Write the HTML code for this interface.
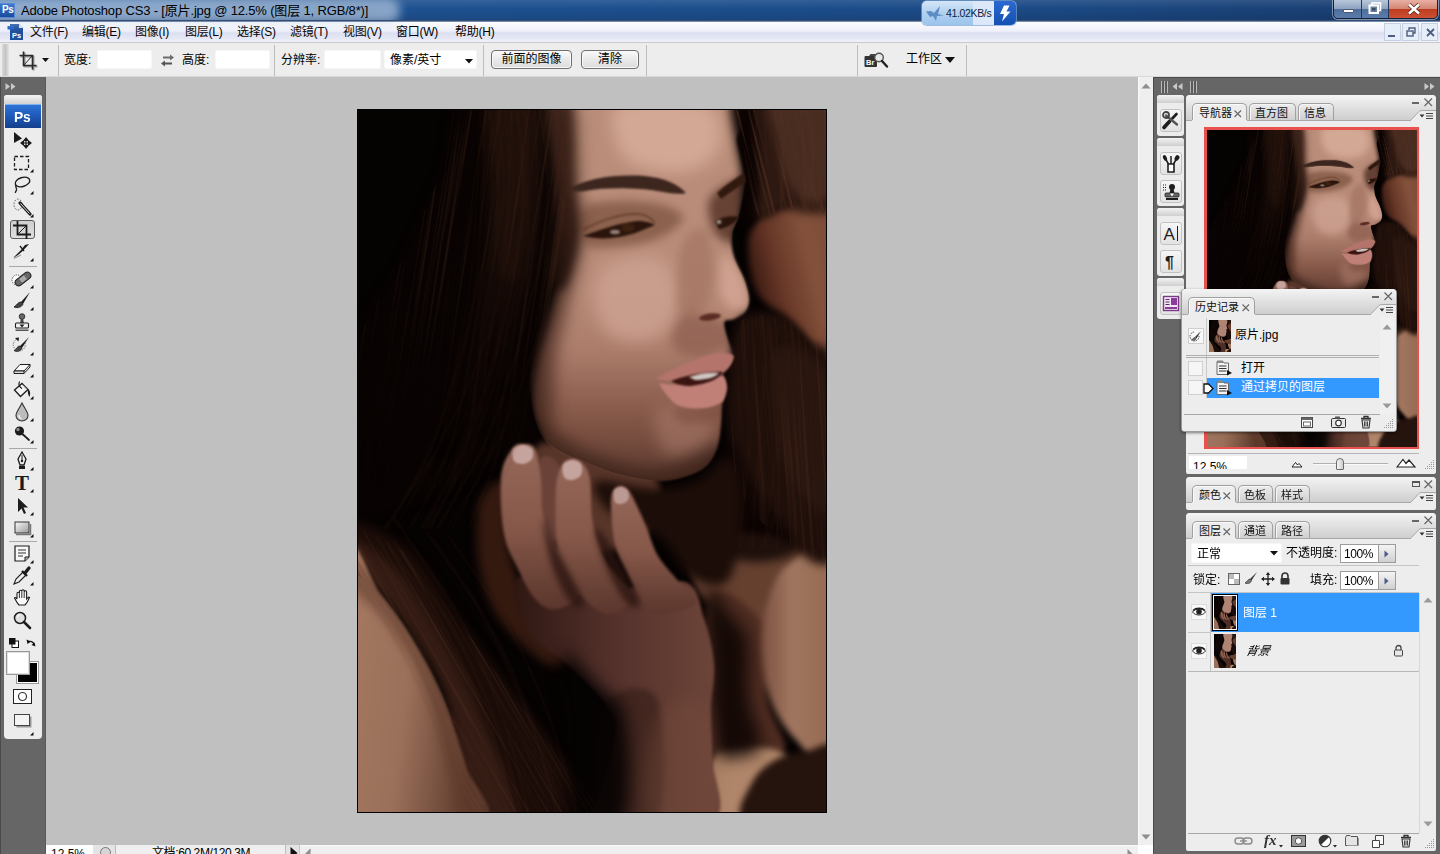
<!DOCTYPE html>
<html lang="zh-CN">
<head>
<meta charset="utf-8">
<title>Adobe Photoshop CS3</title>
<style>
*{box-sizing:border-box;margin:0;padding:0}
html,body{width:1440px;height:854px;overflow:hidden;background:#c0c0c0}
body{position:relative;font-family:"Liberation Sans","Noto Sans CJK SC",sans-serif;font-size:12px;color:#000}
.abs{position:absolute}
.t{position:absolute;white-space:nowrap;line-height:1}
/* title bar */
#title{z-index:3;left:0;top:0;width:1440px;height:22px;background:linear-gradient(90deg,#2f629f 0,#1e5191 27%,#1c4e8c 50%,#1b4a86 70%,#1a4278 88%,#193c6e 100%)}
#title .shade{left:0;top:0;width:1440px;height:22px;background:linear-gradient(180deg,rgba(255,255,255,.10) 0,rgba(255,255,255,0) 40%,rgba(0,0,0,.12) 100%)}
#title .edge{left:0;top:20px;width:1440px;height:2px;background:linear-gradient(180deg,#1b2f52,#8fa9cc)}
/* menu bar */
#menu{left:0;top:22px;width:1440px;height:20px;background:linear-gradient(180deg,#fdfdff 0,#eef0fa 45%,#dcdff0 55%,#e6e8f5 85%,#f1f2fa 100%)}
#menu .t{top:4px;font-size:12px;color:#000;letter-spacing:-.25px}
.mdi{top:1px;width:17px;height:18px;background:#e6eefa;border:1px solid #c4cfe2}
/* options bar */
#opts{left:0;top:42px;width:1440px;height:35px;background:#ededed;border-top:1px solid #c9c9c9;border-bottom:1px solid #d9d9d9}
#opts .t{font-size:12px}
.inp{position:absolute;background:#fff;border:1px solid #f7f7f7;border-radius:2px}
.vsep{position:absolute;width:1px;background:#bdbdbd}
.btn{position:absolute;border:1px solid #707070;border-radius:4px;background:linear-gradient(180deg,#fafafa,#e9e9e9 50%,#dcdcdc);font-size:12px;text-align:center;line-height:17px;white-space:nowrap;box-shadow:inset 0 0 0 1px #f8f8f8}
/* docks */
.dock{position:absolute;background:#666}
.panel{position:absolute;background:#ededed}
</style>
</head>
<body>
<svg width="0" height="0" style="position:absolute">
<symbol id="pht" viewBox="0 0 470 704" preserveAspectRatio="none">
<rect width="470" height="704" fill="#070302"/>
<path d="M105.0,0.0 C132.5,-25.0 191.7,-20.8 210.0,0.0 C228.3,20.8 220.0,82.5 215.0,125.0 C210.0,167.5 185.5,220.0 180.0,255.0 C174.5,290.0 197.0,314.2 182.0,335.0 C167.0,355.8 120.3,369.2 90.0,380.0 C59.7,390.8 15.0,421.7 0.0,400.0 C-15.0,378.3 -7.5,291.7 0.0,250.0 C7.5,208.3 27.5,191.7 45.0,150.0 C62.5,108.3 77.5,25.0 105.0,0.0Z" fill="#0e0604" />
<path d="M384.0,0.0 C394.7,-18.3 455.7,-16.7 470.0,0.0 C484.3,16.7 480.7,81.7 470.0,100.0 C459.3,118.3 420.3,126.7 406.0,110.0 C391.7,93.3 373.3,18.3 384.0,0.0Z" fill="#2a1610" />
<path d="M392.0,128.0 C392.3,109.7 417.0,105.3 430.0,98.0 C443.0,90.7 463.3,56.7 470.0,84.0 C476.7,111.3 477.0,241.3 470.0,262.0 C463.0,282.7 441.0,230.3 428.0,208.0 C415.0,185.7 391.7,146.3 392.0,128.0Z" fill="#663a2b" />
<path d="M392.0,205.0 C408.3,205.3 457.0,222.0 470.0,262.0 C483.0,302.0 484.2,424.5 470.0,445.0 C455.8,465.5 401.3,415.8 385.0,385.0 C368.7,354.2 370.8,290.0 372.0,260.0 C373.2,230.0 375.7,204.7 392.0,205.0Z" fill="#1a0c08" />
<path d="M205.0,0.0 C230.2,-20.8 341.7,-11.0 372.0,0.0 C402.3,11.0 386.7,45.2 387.0,66.0 C387.3,86.8 373.2,104.3 374.0,125.0 C374.8,145.7 393.2,175.3 392.0,190.0 C390.8,204.7 369.7,203.7 367.0,213.0 C364.3,222.3 376.3,232.2 376.0,246.0 C375.7,259.8 367.7,280.7 365.0,296.0 C362.3,311.3 367.3,325.8 360.0,338.0 C352.7,350.2 337.3,364.5 321.0,369.0 C304.7,373.5 281.7,369.5 262.0,365.0 C242.3,360.5 216.7,352.0 203.0,342.0 C189.3,332.0 184.0,321.0 180.0,305.0 C176.0,289.0 175.2,266.2 179.0,246.0 C182.8,225.8 196.0,204.2 203.0,184.0 C210.0,163.8 220.7,155.7 221.0,125.0 C221.3,94.3 179.8,20.8 205.0,0.0Z" fill="#b08474" />
<path d="M180.0,300.0 C184.5,299.7 210.0,330.0 230.0,340.0 C250.0,350.0 278.0,360.8 300.0,360.0 C322.0,359.2 358.5,333.5 362.0,335.0 C365.5,336.5 337.7,364.0 321.0,369.0 C304.3,374.0 281.7,369.5 262.0,365.0 C242.3,360.5 216.7,352.8 203.0,342.0 C189.3,331.2 175.5,300.3 180.0,300.0Z" fill="#6a4438" />
<path d="M0.0,452.0 C11.0,423.3 49.7,503.8 66.0,532.0 C82.3,560.2 88.5,592.3 98.0,621.0 C107.5,649.7 139.3,690.2 123.0,704.0 C106.7,717.8 20.5,746.0 0.0,704.0 C-20.5,662.0 -11.0,480.7 0.0,452.0Z" fill="#9b705a" />
<path d="M0.0,412.0 C11.5,414.2 68.7,470.3 103.0,510.0 C137.3,549.7 182.3,617.7 206.0,650.0 C229.7,682.3 259.3,695.0 245.0,704.0 C230.7,713.0 146.0,723.2 120.0,704.0 C94.0,684.8 103.3,623.5 89.0,589.0 C74.7,554.5 48.8,526.5 34.0,497.0 C19.2,467.5 -11.5,409.8 0.0,412.0Z" fill="#1c0e09" />
<path d="M146.0,340.0 C155.5,332.2 171.3,322.0 180.0,338.0 C188.7,354.0 188.0,414.0 198.0,436.0 C208.0,458.0 218.3,463.8 240.0,470.0 C261.7,476.2 308.5,458.8 328.0,473.0 C347.5,487.2 352.5,516.5 357.0,555.0 C361.5,593.5 373.7,679.2 355.0,704.0 C336.3,728.8 261.0,719.0 245.0,704.0 C229.0,689.0 271.5,644.3 259.0,614.0 C246.5,583.7 193.2,546.8 170.0,522.0 C146.8,497.2 127.8,487.8 120.0,465.0 C112.2,442.2 118.7,405.8 123.0,385.0 C127.3,364.2 136.5,347.8 146.0,340.0Z" fill="#4e2e25" />
<path d="M155.0,340.0 C160.2,325.8 170.8,324.0 178.0,340.0 C185.2,356.0 190.7,412.3 198.0,436.0 C205.3,459.7 221.7,471.3 222.0,482.0 C222.3,492.7 212.5,509.5 200.0,500.0 C187.5,490.5 154.5,451.7 147.0,425.0 C139.5,398.3 149.8,354.2 155.0,340.0Z" fill="#8e5e4e" />
<path d="M205.0,356.0 C209.3,342.5 218.5,338.8 226.0,355.0 C233.5,371.2 241.8,430.8 250.0,453.0 C258.2,475.2 274.7,479.3 275.0,488.0 C275.3,496.7 264.5,513.7 252.0,505.0 C239.5,496.3 207.8,460.8 200.0,436.0 C192.2,411.2 200.7,369.5 205.0,356.0Z" fill="#8e5e4e" />
<path d="M256.0,382.0 C258.3,373.0 264.5,371.2 272.0,382.0 C279.5,392.8 290.0,428.2 301.0,447.0 C312.0,465.8 338.2,485.3 338.0,495.0 C337.8,504.7 313.3,514.8 300.0,505.0 C286.7,495.2 265.3,456.5 258.0,436.0 C250.7,415.5 253.7,391.0 256.0,382.0Z" fill="#865646" />
<path d="M438.0,430.0 C449.0,413.8 464.7,400.5 470.0,438.0 C475.3,475.5 475.0,622.7 470.0,655.0 C465.0,687.3 451.0,652.0 440.0,632.0 C429.0,612.0 404.3,568.7 404.0,535.0 C403.7,501.3 427.0,446.2 438.0,430.0Z" fill="#a07660" />
<path d="M336.0,445.0 C351.0,436.3 407.7,428.8 430.0,428.0 C452.3,427.2 463.3,424.7 470.0,440.0 C476.7,455.3 480.8,505.8 470.0,520.0 C459.2,534.2 426.7,531.7 405.0,525.0 C383.3,518.3 351.5,493.3 340.0,480.0 C328.5,466.7 321.0,453.7 336.0,445.0Z" fill="#65402f" />
<path d="M355.0,650.0 C362.5,639.0 382.2,637.7 395.0,638.0 C407.8,638.3 427.8,641.0 432.0,652.0 C436.2,663.0 433.7,695.3 420.0,704.0 C406.3,712.7 360.8,713.0 350.0,704.0 C339.2,695.0 347.5,661.0 355.0,650.0Z" fill="#b0866a" />
<path d="M396.0,672.0 C406.3,661.7 437.7,647.3 450.0,642.0 C462.3,636.7 466.7,629.7 470.0,640.0 C473.3,650.3 483.7,693.3 470.0,704.0 C456.3,714.7 400.3,709.3 388.0,704.0 C375.7,698.7 385.7,682.3 396.0,672.0Z" fill="#25130d" />
</symbol>
</svg>
<!-- TITLE BAR -->
<div id="title" class="abs">
  <div class="shade abs"></div>
  <div class="abs" style="left:-20px;top:-2px;width:420px;height:25px;border-radius:12px;background:rgba(200,214,232,.62);filter:blur(5px)"></div>
  <div class="edge abs"></div>
  <div class="abs" style="left:0;top:3px;width:15px;height:15px;background:linear-gradient(180deg,#3c7ad0,#1a4a9c);border:1px solid #5a8ad6;border-left:none"></div>
  <div class="t" style="left:2px;top:5px;font-size:10px;font-weight:bold;color:#fff;letter-spacing:-.5px">Ps</div>
  <div class="t" id="ttext" style="left:21px;top:4px;font-size:13px;color:#000;letter-spacing:-.16px">Adobe Photoshop CS3 - [原片.jpg @ 12.5% (图层 1, RGB/8*)]</div>
  <!-- net speed widget -->
  <div class="abs" style="left:922px;top:1px;width:94px;height:24px;border-radius:5px;background:#dce8f8;box-shadow:0 0 0 1px rgba(120,160,210,.7);overflow:hidden">
    <div class="abs" style="left:0;top:0;width:51px;height:24px;background:linear-gradient(180deg,#d4e6f8 0,#b4d2f0 45%,#9cc4ec 100%)"></div>
    <div class="abs" style="left:72px;top:0;width:22px;height:24px;background:linear-gradient(180deg,#2a6ad0,#1450b4)"></div>
    <svg class="abs" style="left:3px;top:4px" width="20" height="17" viewBox="0 0 20 17"><path d="M1,6.500L6,6L9,8L15,1L13,9L19,10.500L12,11L11,16L8,11L5,12Z" fill="#5c8cc4"/></svg>
    <div class="t" style="left:24px;top:7px;font-size:10.500px;color:#0c2344;letter-spacing:-.35px">41.02KB/s</div>
    <svg class="abs" style="left:76px;top:4px" width="14" height="17" viewBox="0 0 14 17"><path d="M6,0.500H11.500L8.500,6.500H12.500L4,16.500L6,9H2Z" fill="#fff"/></svg>
  </div>
  <!-- window buttons -->
  <div class="abs" style="left:1333px;top:-1px;width:105px;height:20px;border:1px solid #10203c;border-radius:0 0 5px 5px;box-shadow:0 0 0 1px rgba(255,255,255,.45);overflow:hidden">
    <div class="abs" style="left:0;top:0;width:28px;height:19px;background:linear-gradient(180deg,#b9c7da 0,#8ea3c0 45%,#4f6e9a 50%,#5d7fae 100%);border-right:1px solid #22385c"></div>
    <div class="abs" style="left:28px;top:0;width:27px;height:19px;background:linear-gradient(180deg,#b9c7da 0,#8ea3c0 45%,#4f6e9a 50%,#5d7fae 100%);border-right:1px solid #22385c"></div>
    <div class="abs" style="left:55px;top:0;width:49px;height:19px;background:linear-gradient(180deg,#e8b0a4 0,#d48674 45%,#c03c20 50%,#cc5434 100%)"></div>
    <div class="abs" style="left:9px;top:9px;width:11px;height:4px;background:#fff;border:1px solid #4a5a74;border-radius:1px"></div>
    <svg class="abs" style="left:34px;top:2px" width="14" height="13" viewBox="0 0 14 13"><rect x="4" y="1" width="8.500" height="7.500" fill="none" stroke="#fff" stroke-width="1.600"/><rect x="1.500" y="3.500" width="8.500" height="7.500" fill="#6a7f9e" stroke="#fff" stroke-width="2"/><rect x="4" y="6" width="3.500" height="2.500" fill="#3a4a64"/></svg>
    <svg class="abs" style="left:73px;top:3px" width="14" height="12" viewBox="0 0 14 12"><path d="M2,1.500L12,10.500M12,1.500L2,10.500" stroke="#5a2a20" stroke-width="4.200"/><path d="M2,1.500L12,10.500M12,1.500L2,10.500" stroke="#fff" stroke-width="2.600"/></svg>
  </div>
</div>
<!-- MENU BAR -->
<div id="menu" class="abs">
  <svg class="abs" style="left:7px;top:1px" width="17" height="18" viewBox="0 0 17 18"><path d="M3,1H12L16,5V17H3Z" fill="#1d4f9e"/><path d="M12,1L16,5H12Z" fill="#dfe8f6"/><path d="M0.500,3H7V6.500H0.500Z" fill="#1a5fc0"/><text x="5" y="14.500" font-size="7.500" font-weight="bold" fill="#fff" font-family="Liberation Sans,sans-serif">Ps</text></svg>
  <div class="t" style="left:30px">文件(F)</div>
  <div class="t" style="left:82px">编辑(E)</div>
  <div class="t" style="left:135px">图像(I)</div>
  <div class="t" style="left:185px">图层(L)</div>
  <div class="t" style="left:237px">选择(S)</div>
  <div class="t" style="left:290px">滤镜(T)</div>
  <div class="t" style="left:343px">视图(V)</div>
  <div class="t" style="left:396px">窗口(W)</div>
  <div class="t" style="left:455px">帮助(H)</div>
  <div class="abs mdi" style="left:1384px"></div><div class="abs mdi" style="left:1402px"></div><div class="abs mdi" style="left:1421px"></div>
  <div class="abs" style="left:1388px;top:13px;width:7px;height:2px;background:#4e5d7e"></div>
  <svg class="abs" style="left:1406px;top:5px" width="10" height="10" viewBox="0 0 10 10"><path d="M3,3V1H9V6H7" fill="none" stroke="#4e5d7e" stroke-width="1.400"/><rect x="1" y="4" width="6" height="5" fill="none" stroke="#4e5d7e" stroke-width="1.400"/></svg>
  <svg class="abs" style="left:1426px;top:6px" width="9" height="9" viewBox="0 0 9 9"><path d="M1,1L8,8M8,1L1,8" stroke="#4e5d7e" stroke-width="1.800"/></svg>
</div>
<!-- OPTIONS BAR -->
<div id="opts" class="abs">
  <div class="abs" style="left:2px;top:1px;width:7px;height:32px;background:linear-gradient(90deg,#d9d9d9,#c4c4c4 50%,#e4e4e4)"></div>
  <svg class="abs" style="left:17px;top:7px" width="22" height="22" viewBox="0 0 22 22"><g fill="none" stroke="#9a9a9a" stroke-width="2"><path d="M7.5,2.5V16.5H20.5M3.5,6.5H16.5V20.5"/></g><g fill="none" stroke="#2a2a2a" stroke-width="1.6"><path d="M6.5,1.5V15.5H19.5M2.5,5.5H15.5V19.5"/><path d="M7,15L15,6" stroke-width="1"/></g></svg>
  <svg class="abs" style="left:42px;top:15px" width="8" height="5"><path d="M0,0H7L3.5,4Z" fill="#111"/></svg>
  <div class="vsep" style="left:58px;top:2px;height:31px"></div>
  <div class="t" style="left:64px;top:11px;font-size:12px">宽度:</div>
  <div class="inp" style="left:97px;top:7px;width:55px;height:19px"></div>
  <svg class="abs" style="left:160px;top:11px" width="15" height="13" viewBox="0 0 15 13"><g fill="#555"><path d="M3,2.5H10V0.5L14,3.5L10,6.5V4.5H3Z" opacity=".85"/><path d="M12,8.5H5V6.5L1,9.500L5,12.5V10.500H12Z"/></g></svg>
  <div class="t" style="left:182px;top:11px;font-size:12px">高度:</div>
  <div class="inp" style="left:215px;top:7px;width:55px;height:19px"></div>
  <div class="vsep" style="left:274px;top:2px;height:31px"></div>
  <div class="t" style="left:281px;top:11px;font-size:12px">分辨率:</div>
  <div class="inp" style="left:324px;top:7px;width:57px;height:19px"></div>
  <div class="inp" style="left:384px;top:7px;width:93px;height:19px"></div>
  <div class="t" style="left:390px;top:11px;font-size:12px">像素/英寸</div>
  <svg class="abs" style="left:465px;top:16px" width="9" height="5"><path d="M0,0H8L4,4.500Z" fill="#111"/></svg>
  <div class="vsep" style="left:483px;top:2px;height:31px"></div>
  <div class="btn" style="left:491px;top:7px;width:81px;height:19px">前面的图像</div>
  <div class="btn" style="left:581px;top:7px;width:58px;height:19px">清除</div>
  <div class="vsep" style="left:646px;top:2px;height:31px"></div>
  <div class="vsep" style="left:857px;top:2px;height:31px"></div>
  <svg class="abs" style="left:863px;top:8px" width="26" height="20" viewBox="0 0 26 20"><path d="M1.500,5H6L7.500,3H13V5" fill="#444"/><rect x="1.500" y="5" width="12.500" height="11" rx="1" fill="#333"/><circle cx="16" cy="6.500" r="4.300" fill="#e8e8e8" stroke="#555" stroke-width="1.400"/><path d="M19,10L24,15.500" stroke="#222" stroke-width="2.400" stroke-linecap="round"/><text x="3" y="14" font-family="Liberation Sans,sans-serif" font-size="7.500" font-weight="bold" fill="#fff">Br</text></svg>
  <div class="t" style="left:906px;top:10px;font-size:12px">工作区</div>
  <svg class="abs" style="left:945px;top:14px" width="11" height="7"><path d="M0,0H10L5,6Z" fill="#111"/></svg>
  <div class="vsep" style="left:966px;top:2px;height:31px"></div>
</div>
<!-- LEFT TOOL DOCK -->
<div class="dock" id="ldock" style="left:0;top:77px;width:46px;height:777px"></div>
<div class="abs" style="left:0;top:77px;width:1px;height:777px;background:#4a4a4a"></div>
<div class="abs" style="left:45px;top:77px;width:1px;height:777px;background:#595959"></div>
<svg class="abs" style="left:5px;top:82px" width="12" height="9"><path d="M0.500,1L5,4.500L0.500,8ZM6,1L10.500,4.500L6,8Z" fill="#c9c9c9"/></svg>
<div class="abs" style="left:4px;top:95px;width:38px;height:644px;background:#ececec;border-radius:3px 3px 4px 4px"></div>
<div class="abs" style="left:4px;top:95px;width:38px;height:9px;background:linear-gradient(180deg,#f4f4f4,#d2d2d2);border-radius:3px 3px 0 0"></div>
<div class="abs" style="left:5px;top:104px;width:36px;height:24px;background:linear-gradient(180deg,#2d74d6 0,#1f5bbb 45%,#143f8c 100%);border-top:1px solid #7fb0ee"></div>
<div class="t" style="left:14px;top:109px;font-size:15px;color:#fff;font-weight:bold;letter-spacing:-.3px;transform:scaleX(.92);transform-origin:0 0">Ps</div>
<div class="abs" style="left:9px;top:266px;width:28px;height:1px;background:#a8a8a8"></div>
<div class="abs" style="left:9px;top:448px;width:28px;height:1px;background:#a8a8a8"></div>
<div class="abs" style="left:9px;top:541px;width:28px;height:1px;background:#a8a8a8"></div>
<div class="abs" style="left:10px;top:220px;width:25px;height:19px;border:1px solid #5a5a5a;border-radius:3px;background:linear-gradient(180deg,#cfcfcf,#dedede)"></div>
<svg class="abs" style="left:11px;top:130px" width="22" height="22" viewBox="0 0 22 22"><path d="M3,2L3,13L11,8.500Z" fill="#1c1c1c"/><path d="M15,8V18M10,13H20M15,8l-2,2.500h4zM15,18l-2,-2.500h4zM10,13l2.500,-2v4zM20,13l-2.500,-2v4z" stroke="#1c1c1c" stroke-width="1.200" fill="#1c1c1c"/></svg>
<svg class="abs" style="left:11px;top:152px" width="22" height="22" viewBox="0 0 22 22"><rect x="3.500" y="4.500" width="14" height="13" fill="none" stroke="#1c1c1c" stroke-width="1.300" stroke-dasharray="3.500 2"/></svg>
<svg class="abs" style="left:30px;top:169px" width="4" height="4"><path d="M3.500,0V3.500H0Z" fill="#111"/></svg>
<svg class="abs" style="left:11px;top:174px" width="22" height="22" viewBox="0 0 22 22"><ellipse cx="11.500" cy="8" rx="7.500" ry="4.500" fill="none" stroke="#1c1c1c" stroke-width="1.400" transform="rotate(-18 11.500 8)"/><path d="M5,11C4,13 6,14 5.500,16C5,17.500 4,18 4.500,19" fill="none" stroke="#1c1c1c" stroke-width="1.300"/></svg>
<svg class="abs" style="left:30px;top:191px" width="4" height="4"><path d="M3.500,0V3.500H0Z" fill="#111"/></svg>
<svg class="abs" style="left:11px;top:197px" width="22" height="22" viewBox="0 0 22 22"><ellipse cx="7" cy="7.500" rx="4" ry="5.500" fill="none" stroke="#555" stroke-width="1" stroke-dasharray="1.500 1.500"/><path d="M9,6L19,17" stroke="#1c1c1c" stroke-width="3.200" stroke-linecap="round"/><path d="M9.500,6.500L18.500,16.500" stroke="#ddd" stroke-width="1"/></svg>
<svg class="abs" style="left:30px;top:214px" width="4" height="4"><path d="M3.500,0V3.500H0Z" fill="#111"/></svg>
<svg class="abs" style="left:11px;top:219px" width="22" height="22" viewBox="0 0 22 22"><path d="M6.500,2V15.500H20M2,6.500H15.500V20" fill="none" stroke="#1c1c1c" stroke-width="1.800"/><path d="M7,15L15,7" stroke="#1c1c1c" stroke-width="1"/></svg>
<svg class="abs" style="left:11px;top:241px" width="22" height="22" viewBox="0 0 22 22"><path d="M2,17C7,15 12,10 18,3L14,4L10,9L4,15Z" fill="#1c1c1c"/><path d="M9,5L13,10" stroke="#1c1c1c" stroke-width="1.300"/><path d="M3,17.500L10,14" stroke="#888" stroke-width="1"/></svg>
<svg class="abs" style="left:30px;top:258px" width="4" height="4"><path d="M3.500,0V3.500H0Z" fill="#111"/></svg>
<svg class="abs" style="left:11px;top:268px" width="22" height="22" viewBox="0 0 22 22"><circle cx="6" cy="12" r="5" fill="#fff" stroke="#444" stroke-width="1" stroke-dasharray="1.200 1.200"/><rect x="3" y="7.500" width="18" height="7" rx="3.500" fill="#666" stroke="#1c1c1c" stroke-width="1" transform="rotate(-38 12 11)"/><rect x="9" y="8.500" width="6" height="5" fill="#aaa" transform="rotate(-38 12 11)"/></svg>
<svg class="abs" style="left:30px;top:285px" width="4" height="4"><path d="M3.500,0V3.500H0Z" fill="#111"/></svg>
<svg class="abs" style="left:11px;top:290px" width="22" height="22" viewBox="0 0 22 22"><path d="M19,2L10,12L12,14Z" fill="#1c1c1c"/><path d="M10,12C7,12 6,15 3,17C7,18.500 11,17 12,14Z" fill="#444" stroke="#1c1c1c" stroke-width=".8"/></svg>
<svg class="abs" style="left:30px;top:307px" width="4" height="4"><path d="M3.500,0V3.500H0Z" fill="#111"/></svg>
<svg class="abs" style="left:11px;top:312px" width="22" height="22" viewBox="0 0 22 22"><circle cx="11" cy="4.500" r="2.800" fill="#666" stroke="#1c1c1c" stroke-width=".8"/><path d="M9.800,7H12.200L12.800,11H9.200Z" fill="#444"/><rect x="4.500" y="11" width="13" height="5" rx="1" fill="#f2f2f2" stroke="#1c1c1c" stroke-width="1.100"/><rect x="4.500" y="17.500" width="13" height="1.500" fill="#555"/><path d="M8.500,12.500h5l-2.500,3z" fill="#1c1c1c"/></svg>
<svg class="abs" style="left:30px;top:329px" width="4" height="4"><path d="M3.500,0V3.500H0Z" fill="#111"/></svg>
<svg class="abs" style="left:11px;top:335px" width="22" height="22" viewBox="0 0 22 22"><path d="M18,2L9,11L11,13Z" fill="#1c1c1c"/><path d="M9,11C6,11 6,14 3,15.500C6,17.500 10,16 11,13Z" fill="#444" stroke="#1c1c1c" stroke-width=".8"/><path d="M14,8A6,6 0 1 1 7,4" fill="none" stroke="#555" stroke-width=".9" stroke-dasharray="1.200 1.200"/><path d="M4,3L8,2.500L7.500,6.500Z" fill="#1c1c1c"/></svg>
<svg class="abs" style="left:30px;top:352px" width="4" height="4"><path d="M3.500,0V3.500H0Z" fill="#111"/></svg>
<svg class="abs" style="left:11px;top:357px" width="22" height="22" viewBox="0 0 22 22"><path d="M3,14L9,7.500H19L13,14Z" fill="#fafafa" stroke="#1c1c1c" stroke-width="1"/><path d="M3,14H13V16.500H3Z" fill="#ddd" stroke="#1c1c1c" stroke-width="1"/><path d="M13,16.500L19,10V7.500" fill="none" stroke="#1c1c1c" stroke-width="1"/></svg>
<svg class="abs" style="left:30px;top:374px" width="4" height="4"><path d="M3.500,0V3.500H0Z" fill="#111"/></svg>
<svg class="abs" style="left:11px;top:379px" width="22" height="22" viewBox="0 0 22 22"><path d="M3.500,11L11,4.500L17,10.500L9.500,17.500Z" fill="#f4f4f4" stroke="#1c1c1c" stroke-width="1.300"/><path d="M11,4.500L17,10.500L14,9Z" fill="#888"/><path d="M8.500,2.500C7.500,5 8.500,8 11,9.500" fill="none" stroke="#1c1c1c" stroke-width="1.100"/><path d="M17,10C19.500,11.500 19.500,15 18.500,18C17,16 16.500,13 17,10Z" fill="#1c1c1c"/></svg>
<svg class="abs" style="left:30px;top:396px" width="4" height="4"><path d="M3.500,0V3.500H0Z" fill="#111"/></svg>
<svg class="abs" style="left:11px;top:401px" width="22" height="22" viewBox="0 0 22 22"><path d="M11,2C8,8 5,11 5,14.500A6,5.500 0 0 0 17,14.500C17,11 14,8 11,2Z" fill="#bcbcbc" stroke="#333" stroke-width="1.100"/><path d="M8,14A3,3 0 0 0 10.500,17.500" stroke="#fff" stroke-width="1.200" fill="none"/></svg>
<svg class="abs" style="left:30px;top:418px" width="4" height="4"><path d="M3.500,0V3.500H0Z" fill="#111"/></svg>
<svg class="abs" style="left:11px;top:423px" width="22" height="22" viewBox="0 0 22 22"><circle cx="8.500" cy="8" r="4.600" fill="#1a1a1a"/><circle cx="7" cy="6.500" r="1.700" fill="#8a8a8a"/><path d="M12,11.500L18,17" stroke="#1c1c1c" stroke-width="1.700" stroke-linecap="round"/></svg>
<svg class="abs" style="left:30px;top:440px" width="4" height="4"><path d="M3.500,0V3.500H0Z" fill="#111"/></svg>
<svg class="abs" style="left:11px;top:450px" width="22" height="22" viewBox="0 0 22 22"><path d="M11,2L15,9L13,15H9L7,9Z" fill="#eee" stroke="#1c1c1c" stroke-width="1.300"/><path d="M11,5V11" stroke="#1c1c1c" stroke-width="1"/><circle cx="11" cy="11" r="1.200" fill="#1c1c1c"/><rect x="8" y="16" width="6" height="3" fill="#1c1c1c"/></svg>
<svg class="abs" style="left:30px;top:467px" width="4" height="4"><path d="M3.500,0V3.500H0Z" fill="#111"/></svg>
<div class="t" style="left:15px;top:473px;font-family:'Liberation Serif',serif;font-size:21px;font-weight:bold;color:#1c1c1c">T</div>
<svg class="abs" style="left:30px;top:489px" width="4" height="4"><path d="M3.500,0V3.500H0Z" fill="#111"/></svg>
<svg class="abs" style="left:11px;top:495px" width="22" height="22" viewBox="0 0 22 22"><path d="M7,3L7,17L10.500,13.500L13,19L15,18L12.500,12.500L17,12.500Z" fill="#1c1c1c"/></svg>
<svg class="abs" style="left:30px;top:512px" width="4" height="4"><path d="M3.500,0V3.500H0Z" fill="#111"/></svg>
<svg class="abs" style="left:11px;top:517px" width="22" height="22" viewBox="0 0 22 22"><defs><linearGradient id="grct" x1="0" y1="0" x2="1" y2="1"><stop offset="0" stop-color="#fafafa"/><stop offset="1" stop-color="#9a9a9a"/></linearGradient></defs><rect x="4" y="5" width="14" height="11" fill="url(#grct)" stroke="#333" stroke-width="1"/><path d="M5,17.500H19.500V7" fill="none" stroke="#777" stroke-width="1.500"/></svg>
<svg class="abs" style="left:30px;top:534px" width="4" height="4"><path d="M3.500,0V3.500H0Z" fill="#111"/></svg>
<svg class="abs" style="left:11px;top:543px" width="22" height="22" viewBox="0 0 22 22"><path d="M4,3H18V14L14,18H4Z" fill="#f8f8f8" stroke="#1c1c1c" stroke-width="1.200"/><path d="M18,14H14V18" fill="#bbb" stroke="#1c1c1c" stroke-width="1"/><path d="M7,7H15M7,10H15M7,13H12" stroke="#333" stroke-width="1"/></svg>
<svg class="abs" style="left:30px;top:560px" width="4" height="4"><path d="M3.500,0V3.500H0Z" fill="#111"/></svg>
<svg class="abs" style="left:11px;top:565px" width="22" height="22" viewBox="0 0 22 22"><path d="M3,19L5,14L12,7L15,10L8,17Z" fill="#eee" stroke="#1c1c1c" stroke-width="1.100"/><path d="M11,6L16,11" stroke="#1c1c1c" stroke-width="2.400"/><path d="M14,8L18,3" stroke="#1c1c1c" stroke-width="3.400" stroke-linecap="round"/></svg>
<svg class="abs" style="left:30px;top:582px" width="4" height="4"><path d="M3.500,0V3.500H0Z" fill="#111"/></svg>
<svg class="abs" style="left:11px;top:587px" width="22" height="22" viewBox="0 0 22 22"><path d="M6,12V6.500A1.200,1.200 0 0 1 8.400,6.500V4.500A1.200,1.200 0 0 1 10.800,4.500V4A1.200,1.200 0 0 1 13.200,4V5A1.200,1.200 0 0 1 15.600,5V12C16.500,11 17.500,9.500 18.500,10.500C17.500,13 16,16 14,18H8C6,16 4.500,13 3.500,11C4.500,10 5.500,11 6,12Z" fill="#fafafa" stroke="#1c1c1c" stroke-width="1.100"/><path d="M8.400,6.500V11M10.800,4.500V11M13.200,5V11" stroke="#1c1c1c" stroke-width=".9"/></svg>
<svg class="abs" style="left:11px;top:609px" width="22" height="22" viewBox="0 0 22 22"><circle cx="9" cy="9" r="5.500" fill="#e0e0e0" stroke="#1c1c1c" stroke-width="1.500"/><path d="M6.500,8A3,3 0 0 1 9,5.500" stroke="#fff" stroke-width="1.200" fill="none"/><path d="M13,13L19,19" stroke="#1c1c1c" stroke-width="2.600" stroke-linecap="round"/></svg>
<svg class="abs" style="left:8px;top:637px" width="30" height="12" viewBox="0 0 30 12"><rect x="4" y="4" width="6.500" height="6.500" fill="#fff" stroke="#111" stroke-width="1"/><rect x="1" y="1" width="6.500" height="6.500" fill="#111"/><path d="M20,5A4,4 0 0 1 26,7" fill="none" stroke="#111" stroke-width="1.300"/><path d="M18.500,2.500L19.500,7L23,4.500Z" fill="#111"/><path d="M27.500,9.500L26.500,5.500L23.500,8Z" fill="#111"/></svg>
<div class="abs" style="left:17px;top:662px;width:21px;height:21px;background:#000;border:1px solid #fff;outline:1px solid #999"></div>
<div class="abs" style="left:7px;top:652px;width:22px;height:22px;background:#fff;border:1px solid #e0e0e0;outline:1px solid #9a9a9a"></div>
<svg class="abs" style="left:13px;top:689px" width="19" height="15" viewBox="0 0 19 15"><rect x=".5" y=".5" width="18" height="14" fill="#fdfdfd" stroke="#222"/><circle cx="9.500" cy="7.500" r="4" fill="#fff" stroke="#333" stroke-width="1.200"/></svg>
<svg class="abs" style="left:13px;top:713px" width="20" height="16" viewBox="0 0 20 16"><rect x="3.500" y="3.500" width="15" height="11" fill="#999"/><rect x="1.500" y="1.500" width="15" height="11" fill="#f4f4f4" stroke="#444"/></svg>
<svg class="abs" style="left:30px;top:732px" width="4" height="4"><path d="M3.500,0V3.500H0Z" fill="#111"/></svg>
<!-- RIGHT DOCK -->
<div class="dock" id="rdock" style="left:1153px;top:77px;width:287px;height:777px"></div>
<div class="abs" style="left:1153px;top:77px;width:1px;height:777px;background:#4a4a4a"></div>
<div class="abs" style="left:1153px;top:77px;width:287px;height:1px;background:#4a4a4a"></div>
<div class="abs" style="left:1161px;top:81px;width:7px;height:12px;background:repeating-linear-gradient(90deg,#b8b8b8 0,#b8b8b8 1px,#5a5a5a 1px,#5a5a5a 3px)"></div>
<div class="abs" style="left:1190px;top:81px;width:7px;height:12px;background:repeating-linear-gradient(90deg,#b8b8b8 0,#b8b8b8 1px,#5a5a5a 1px,#5a5a5a 3px)"></div>
<svg class="abs" style="left:1172px;top:82px" width="12" height="9"><path d="M5,1L0.500,4.500L5,8ZM10.500,1L6,4.500L10.500,8Z" fill="#c9c9c9"/></svg>
<svg class="abs" style="left:1424px;top:82px" width="12" height="9"><path d="M0.500,1L5,4.500L0.500,8ZM6,1L10.500,4.500L6,8Z" fill="#c9c9c9"/></svg>
<div class="abs" style="left:1157px;top:95px;width:27px;height:41px;background:#ececec;border-radius:3px"></div>
<div class="abs" style="left:1157px;top:95px;width:27px;height:8px;background:linear-gradient(180deg,#f2f2f2,#cfcfcf);border-radius:3px 3px 0 0"></div>
<div class="abs" style="left:1157px;top:138px;width:27px;height:68px;background:#ececec;border-radius:3px"></div>
<div class="abs" style="left:1157px;top:138px;width:27px;height:8px;background:linear-gradient(180deg,#f2f2f2,#cfcfcf);border-radius:3px 3px 0 0"></div>
<div class="abs" style="left:1157px;top:208px;width:27px;height:68px;background:#ececec;border-radius:3px"></div>
<div class="abs" style="left:1157px;top:208px;width:27px;height:8px;background:linear-gradient(180deg,#f2f2f2,#cfcfcf);border-radius:3px 3px 0 0"></div>
<div class="abs" style="left:1157px;top:278px;width:27px;height:41px;background:#ececec;border-radius:3px"></div>
<div class="abs" style="left:1157px;top:278px;width:27px;height:8px;background:linear-gradient(180deg,#f2f2f2,#cfcfcf);border-radius:3px 3px 0 0"></div>
<div class="abs" style="left:1160px;top:109px;width:22px;height:23px;border:1px solid #c2c2c2;border-radius:3px;background:linear-gradient(180deg,#f6f6f6,#e2e2e2)"></div>
<svg class="abs" style="left:1161px;top:110px" width="20" height="21" viewBox="0 0 20 21"><path d="M3,17.500L15.500,4" stroke="#1e1e1e" stroke-width="2.600" stroke-linecap="round"/><path d="M3,17.500L8,12" stroke="#1e1e1e" stroke-width="3.600" stroke-linecap="round"/><path d="M5,5.500L16,14.500" stroke="#555" stroke-width="2.400" stroke-linecap="round"/><circle cx="5" cy="5" r="3" fill="none" stroke="#444" stroke-width="1.800"/></svg>
<div class="abs" style="left:1160px;top:152px;width:22px;height:23px;border:1px solid #c2c2c2;border-radius:3px;background:linear-gradient(180deg,#f6f6f6,#e2e2e2)"></div>
<svg class="abs" style="left:1161px;top:153px" width="20" height="21" viewBox="0 0 20 21"><path d="M7,11H13V19H7Z" fill="#fff" stroke="#1e1e1e" stroke-width="1.600"/><path d="M10,11V3M7.500,11L4,5M12.500,11L16,5" stroke="#1e1e1e" stroke-width="1.500"/><ellipse cx="4" cy="5" rx="1.800" ry="3" fill="#1e1e1e" transform="rotate(-25 4 5)"/><ellipse cx="16" cy="5" rx="2.200" ry="3" fill="#1e1e1e" transform="rotate(30 16 5)"/></svg>
<div class="abs" style="left:1160px;top:180px;width:22px;height:23px;border:1px solid #c2c2c2;border-radius:3px;background:linear-gradient(180deg,#f6f6f6,#e2e2e2)"></div>
<svg class="abs" style="left:1161px;top:181px" width="20" height="21" viewBox="0 0 20 21"><circle cx="11" cy="6" r="3" fill="#1e1e1e"/><path d="M9.500,8h3l1,4h-5z" fill="#1e1e1e"/><rect x="4" y="12" width="14" height="4" rx="1" fill="#666" stroke="#1e1e1e" stroke-width=".8"/><rect x="5" y="17" width="12" height="2" fill="#1e1e1e"/><path d="M2,4h4M2,6.500h4M2,9h4" stroke="#1e1e1e" stroke-width="1" stroke-dasharray="1 1"/><path d="M9,12.500h4l-2,3z" fill="#fff"/></svg>
<div class="abs" style="left:1160px;top:222px;width:22px;height:23px;border:1px solid #c2c2c2;border-radius:3px;background:linear-gradient(180deg,#f6f6f6,#e2e2e2)"></div>
<svg class="abs" style="left:1161px;top:223px" width="20" height="21" viewBox="0 0 20 21"><text x="2.500" y="16.500" font-size="17" fill="#1e1e1e" style="font-family:'Liberation Sans','Noto Sans CJK SC',sans-serif">A</text><path d="M16.500,3V18" stroke="#1e1e1e" stroke-width="1"/></svg>
<div class="abs" style="left:1160px;top:250px;width:22px;height:23px;border:1px solid #c2c2c2;border-radius:3px;background:linear-gradient(180deg,#f6f6f6,#e2e2e2)"></div>
<svg class="abs" style="left:1161px;top:251px" width="20" height="21" viewBox="0 0 20 21"><text x="4" y="16.500" font-size="16" font-weight="bold" fill="#1e1e1e" style="font-family:'Liberation Sans','Noto Sans CJK SC',sans-serif">¶</text></svg>
<div class="abs" style="left:1160px;top:292px;width:22px;height:23px;border:1px solid #c2c2c2;border-radius:3px;background:linear-gradient(180deg,#f6f6f6,#e2e2e2)"></div>
<svg class="abs" style="left:1161px;top:293px" width="20" height="21" viewBox="0 0 20 21"><rect x="2.500" y="3.500" width="15" height="14" fill="#f2e6f4" stroke="#7a3a86" stroke-width="1.400"/><rect x="10" y="5" width="6" height="7" fill="#8a3d98"/><path d="M4.500,6.500h4M4.500,9h4M4.500,11.500h4" stroke="#5a2a66" stroke-width="1.200"/><rect x="4" y="14" width="12" height="2" fill="#8a3d98"/></svg>
<div class="abs" style="left:1186px;top:95px;width:250px;height:379px;background:#ededed;border-radius:4px 4px 2px 2px"></div>
<div class="abs" style="left:1186px;top:95px;width:250px;height:26px;background:linear-gradient(180deg,#f4f4f4 0,#e6e6e6 35%,#cdcdcd 100%);border-radius:4px 4px 0 0"></div>
<div class="abs" style="left:1192px;top:103px;width:55px;height:18px;background:#ededed;border:1px solid #a0a0a0;border-bottom:none;border-radius:5px 5px 0 0;box-shadow:inset 1px 1px 0 #fafafa"></div>
<div class="t" style="left:1199px;top:108px;font-size:11px;color:#111">导航器</div>
<svg class="abs" style="left:1234px;top:110px" width="8" height="8"><path d="M0.500,0.500L7,7M7,0.500L0.500,7" stroke="#666" stroke-width="1.100"/></svg>
<div class="abs" style="left:1249px;top:103px;width:47px;height:17px;background:linear-gradient(180deg,#ececec,#cfcfcf);border:1px solid #a0a0a0;border-bottom:none;border-radius:5px 5px 0 0;box-shadow:inset 1px 1px 0 #f6f6f6"></div>
<div class="t" style="left:1255px;top:108px;font-size:11px;color:#111">直方图</div>
<div class="abs" style="left:1298px;top:103px;width:36px;height:17px;background:linear-gradient(180deg,#ececec,#cfcfcf);border:1px solid #a0a0a0;border-bottom:none;border-radius:5px 5px 0 0;box-shadow:inset 1px 1px 0 #f6f6f6"></div>
<div class="t" style="left:1304px;top:108px;font-size:11px;color:#111">信息</div>
<div class="abs" style="left:1186px;top:120px;width:250px;height:1px;background:#a8a8a8"></div>
<div class="abs" style="left:1192px;top:120px;width:55px;height:1px;background:#ededed"></div>
<div class="abs" style="left:1412px;top:102px;width:7px;height:2px;background:#666"></div>
<svg class="abs" style="left:1424px;top:98px" width="9" height="9"><path d="M0.500,0.500L8,8M8,0.500L0.500,8" stroke="#666" stroke-width="1.200"/></svg>
<svg class="abs" style="left:1410px;top:110px" width="26" height="11" viewBox="0 0 26 11"><path d="M0,11L9,1.500Q10,0.500 12,0.500H26V11Z" fill="#ededed"/><path d="M0,11L9,1.500Q10,0.500 12,0.500H26" fill="none" stroke="#a8a8a8"/><path d="M9.500,4.500H14.500L12,7.500Z" fill="#333"/><path d="M16,3.500H23M16,6H23M16,8.500H23" stroke="#444" stroke-width="1.100"/></svg>
<div class="abs" style="left:1204px;top:127px;width:215px;height:322px;background:#e8514e"></div>
<svg class="abs" style="left:1206.500px;top:130px" width="210" height="316.500" viewBox="0 0 470 704" preserveAspectRatio="none">
<defs>
    <filter id="b12n" color-interpolation-filters="sRGB" x="-30%" y="-30%" width="160%" height="160%"><feGaussianBlur stdDeviation="12"/></filter>
    <filter id="b8n" color-interpolation-filters="sRGB" x="-30%" y="-30%" width="160%" height="160%"><feGaussianBlur stdDeviation="8"/></filter>
    <filter id="b5n" color-interpolation-filters="sRGB" x="-30%" y="-30%" width="160%" height="160%"><feGaussianBlur stdDeviation="5"/></filter>
    <filter id="b3n" color-interpolation-filters="sRGB" x="-30%" y="-30%" width="160%" height="160%"><feGaussianBlur stdDeviation="3"/></filter>
    <filter id="b2n" color-interpolation-filters="sRGB" x="-30%" y="-30%" width="160%" height="160%"><feGaussianBlur stdDeviation="1.6"/></filter>
    <filter id="b1n" color-interpolation-filters="sRGB" x="-30%" y="-30%" width="160%" height="160%"><feGaussianBlur stdDeviation="0.8"/></filter>
    <linearGradient id="gfacen" x1="0" y1="0" x2="0" y2="1">
     <stop offset="0" stop-color="#b98d79"/><stop offset="0.5" stop-color="#b88b78"/><stop offset="0.66" stop-color="#ab7c6a"/><stop offset="0.82" stop-color="#875a4a"/><stop offset="1" stop-color="#5c392e"/>
    </linearGradient>
    <linearGradient id="gshln" x1="0" y1="0" x2="1" y2="0.25">
     <stop offset="0" stop-color="#a67a62"/><stop offset="0.55" stop-color="#9b705a"/><stop offset="1" stop-color="#5e3c2e"/>
    </linearGradient>
    <linearGradient id="ghandn" x1="0" y1="0" x2="1" y2="0">
     <stop offset="0" stop-color="#2e1712"/><stop offset="0.45" stop-color="#52302a"/><stop offset="1" stop-color="#6e463a"/>
    </linearGradient>
    <linearGradient id="gf1n" x1="0" y1="0" x2="0" y2="1">
     <stop offset="0" stop-color="#96685a"/><stop offset="0.5" stop-color="#86584a"/><stop offset="1" stop-color="#5a362c"/>
    </linearGradient>
    <linearGradient id="gshrn" x1="0" y1="0" x2="1" y2="0">
     <stop offset="0" stop-color="#7a5040"/><stop offset="0.4" stop-color="#a07660"/><stop offset="1" stop-color="#94684f"/>
    </linearGradient>
    <linearGradient id="grhn" gradientUnits="userSpaceOnUse" x1="392" y1="150" x2="476" y2="130">
 <stop offset="0" stop-color="#3e1c13"/><stop offset="0.3" stop-color="#683828"/><stop offset="0.7" stop-color="#84523c"/><stop offset="1" stop-color="#7c4c38"/>
</linearGradient>
<filter id="htxn" color-interpolation-filters="sRGB" x="0" y="0" width="100%" height="100%">
 <feTurbulence type="fractalNoise" baseFrequency="0.35 0.004" numOctaves="3" seed="4" result="n"/>
 <feColorMatrix in="n" type="matrix" values="0 0 0 0 0.30  0 0 0 0 0.17  0 0 0 0 0.12  3.4 0 0 0 -1.7"/>
</filter>
<linearGradient id="ghbn" gradientUnits="userSpaceOnUse" x1="0" y1="0" x2="0" y2="340">
 <stop offset="0" stop-color="#1e0f0a"/><stop offset="0.45" stop-color="#150a07"/><stop offset="0.75" stop-color="#0a0403"/><stop offset="1" stop-color="#060202"/>
</linearGradient>
<linearGradient id="ghfn" gradientUnits="userSpaceOnUse" x1="0" y1="0" x2="0" y2="200">
 <stop offset="0" stop-color="#40261c"/><stop offset="0.6" stop-color="#321c14"/><stop offset="1" stop-color="#170b07"/>
</linearGradient>
<linearGradient id="gtmn" gradientUnits="userSpaceOnUse" x1="0" y1="0" x2="0" y2="420">
 <stop offset="0" stop-color="#fff" stop-opacity="1"/><stop offset="0.4" stop-color="#fff" stop-opacity=".65"/><stop offset="0.65" stop-color="#fff" stop-opacity=".22"/><stop offset="0.8" stop-color="#fff" stop-opacity=".05"/><stop offset="1" stop-color="#fff" stop-opacity="0"/>
</linearGradient>
<mask id="mtmn" maskUnits="userSpaceOnUse" x="-10" y="-10" width="490" height="724"><rect x="-10" y="-10" width="490" height="724" fill="url(#gtmn)"/></mask>
<clipPath id="cpfn"><rect x="0" y="0" width="470" height="704"/></clipPath>
    </defs>
<g clip-path="url(#cpfn)">
<rect x="-5" y="-5" width="480" height="714" fill="#050202"/>
<g filter="url(#b3n)">
<path d="M392.0,128.0 C393.8,118.5 398.7,113.0 405.0,108.0 C411.3,103.0 418.2,102.0 430.0,98.0 C441.8,94.0 468.3,56.7 476.0,84.0 C483.7,111.3 480.0,237.3 476.0,262.0 C472.0,286.7 460.0,241.0 452.0,232.0 C444.0,223.0 435.8,215.0 428.0,208.0 C420.2,201.0 410.7,197.2 405.0,190.0 C399.3,182.8 396.2,175.3 394.0,165.0 C391.8,154.7 390.2,137.5 392.0,128.0Z" fill="url(#grhn)" />
<path d="M178.0,335.0 C188.0,327.0 219.7,345.8 240.0,352.0 C260.3,358.2 291.3,360.7 300.0,372.0 C308.7,383.3 298.3,408.7 292.0,420.0 C285.7,431.3 277.3,436.7 262.0,440.0 C246.7,443.3 213.7,446.7 200.0,440.0 C186.3,433.3 183.7,417.5 180.0,400.0 C176.3,382.5 168.0,343.0 178.0,335.0Z" fill="#583529" />
<path d="M336.0,445.0 C341.3,435.8 356.3,427.8 372.0,425.0 C387.7,422.2 412.7,425.5 430.0,428.0 C447.3,430.5 468.3,424.7 476.0,440.0 C483.7,455.3 487.8,505.8 476.0,520.0 C464.2,534.2 423.5,527.5 405.0,525.0 C386.5,522.5 375.8,512.5 365.0,505.0 C354.2,497.5 344.8,490.0 340.0,480.0 C335.2,470.0 330.7,454.2 336.0,445.0Z" fill="#65402f" />
<path d="M352.0,490.0 C360.2,468.3 395.3,498.3 405.0,515.0 C414.7,531.7 406.2,569.2 410.0,590.0 C413.8,610.8 430.5,630.0 428.0,640.0 C425.5,650.0 407.0,649.2 395.0,650.0 C383.0,650.8 363.2,671.7 356.0,645.0 C348.8,618.3 343.8,511.7 352.0,490.0Z" fill="#4e2c21" />
<path d="M432.0,455.0 C442.7,448.3 468.7,414.7 476.0,448.0 C483.3,481.3 482.0,624.3 476.0,655.0 C470.0,685.7 450.3,642.5 440.0,632.0 C429.7,621.5 420.0,608.2 414.0,592.0 C408.0,575.8 404.3,552.3 404.0,535.0 C403.7,517.7 407.3,501.3 412.0,488.0 C416.7,474.7 421.3,461.7 432.0,455.0Z" fill="url(#gshrn)" />
<path d="M355.0,650.0 C362.5,637.7 382.2,637.7 395.0,638.0 C407.8,638.3 427.8,639.7 432.0,652.0 C436.2,664.3 433.7,702.0 420.0,712.0 C406.3,722.0 360.8,722.3 350.0,712.0 C339.2,701.7 347.5,662.3 355.0,650.0Z" fill="#b0866a" />
</g>
<g filter="url(#b2n)">
<path d="M190.0,-6.0 C219.0,-12.5 340.3,-12.5 372.0,-6.0 C403.7,0.5 377.5,21.0 380.0,33.0 C382.5,45.0 386.2,57.3 387.0,66.0 C387.8,74.7 386.2,78.0 385.0,85.0 C383.8,92.0 381.8,101.3 380.0,108.0 C378.2,114.7 374.5,118.3 374.0,125.0 C373.5,131.7 374.8,140.5 377.0,148.0 C379.2,155.5 384.5,163.0 387.0,170.0 C389.5,177.0 391.8,184.5 392.0,190.0 C392.2,195.5 390.5,199.7 388.0,203.0 C385.5,206.3 380.5,208.3 377.0,210.0 C373.5,211.7 368.2,209.8 367.0,213.0 C365.8,216.2 368.5,223.5 370.0,229.0 C371.5,234.5 375.7,241.2 376.0,246.0 C376.3,250.8 374.0,254.3 372.0,258.0 C370.0,261.7 364.3,264.5 364.0,268.0 C363.7,271.5 369.8,274.3 370.0,279.0 C370.2,283.7 366.0,290.0 365.0,296.0 C364.0,302.0 364.8,308.0 364.0,315.0 C363.2,322.0 362.8,330.8 360.0,338.0 C357.2,345.2 353.5,352.8 347.0,358.0 C340.5,363.2 329.7,366.8 321.0,369.0 C312.3,371.2 304.8,371.7 295.0,371.0 C285.2,370.3 273.0,368.0 262.0,365.0 C251.0,362.0 238.8,356.8 229.0,353.0 C219.2,349.2 210.0,346.2 203.0,342.0 C196.0,337.8 191.2,334.2 187.0,328.0 C182.8,321.8 180.2,314.2 178.0,305.0 C175.8,295.8 174.3,282.8 174.0,273.0 C173.7,263.2 174.0,256.0 176.0,246.0 C178.0,236.0 182.7,223.3 186.0,213.0 C189.3,202.7 192.8,193.8 196.0,184.0 C199.2,174.2 202.7,163.8 205.0,154.0 C207.3,144.2 210.0,138.2 210.0,125.0 C210.0,111.8 207.0,90.3 205.0,75.0 C203.0,59.7 200.5,46.5 198.0,33.0 C195.5,19.5 161.0,0.5 190.0,-6.0Z" fill="url(#gfacen)" />
</g>
<clipPath id="cfacen"><path d="M190.0,-6.0 C219.0,-12.5 340.3,-12.5 372.0,-6.0 C403.7,0.5 377.5,21.0 380.0,33.0 C382.5,45.0 386.2,57.3 387.0,66.0 C387.8,74.7 386.2,78.0 385.0,85.0 C383.8,92.0 381.8,101.3 380.0,108.0 C378.2,114.7 374.5,118.3 374.0,125.0 C373.5,131.7 374.8,140.5 377.0,148.0 C379.2,155.5 384.5,163.0 387.0,170.0 C389.5,177.0 391.8,184.5 392.0,190.0 C392.2,195.5 390.5,199.7 388.0,203.0 C385.5,206.3 380.5,208.3 377.0,210.0 C373.5,211.7 368.2,209.8 367.0,213.0 C365.8,216.2 368.5,223.5 370.0,229.0 C371.5,234.5 375.7,241.2 376.0,246.0 C376.3,250.8 374.0,254.3 372.0,258.0 C370.0,261.7 364.3,264.5 364.0,268.0 C363.7,271.5 369.8,274.3 370.0,279.0 C370.2,283.7 366.0,290.0 365.0,296.0 C364.0,302.0 364.8,308.0 364.0,315.0 C363.2,322.0 362.8,330.8 360.0,338.0 C357.2,345.2 353.5,352.8 347.0,358.0 C340.5,363.2 329.7,366.8 321.0,369.0 C312.3,371.2 304.8,371.7 295.0,371.0 C285.2,370.3 273.0,368.0 262.0,365.0 C251.0,362.0 238.8,356.8 229.0,353.0 C219.2,349.2 210.0,346.2 203.0,342.0 C196.0,337.8 191.2,334.2 187.0,328.0 C182.8,321.8 180.2,314.2 178.0,305.0 C175.8,295.8 174.3,282.8 174.0,273.0 C173.7,263.2 174.0,256.0 176.0,246.0 C178.0,236.0 182.7,223.3 186.0,213.0 C189.3,202.7 192.8,193.8 196.0,184.0 C199.2,174.2 202.7,163.8 205.0,154.0 C207.3,144.2 210.0,138.2 210.0,125.0 C210.0,111.8 207.0,90.3 205.0,75.0 C203.0,59.7 200.5,46.5 198.0,33.0 C195.5,19.5 161.0,0.5 190.0,-6.0Z"/></clipPath>
<g clip-path="url(#cfacen)">
<g filter="url(#b8n)">
<path d="M170.0,-10.0 C178.2,-69.2 205.3,-25.0 214.0,-10.0 C222.7,5.0 220.0,56.7 222.0,80.0 C224.0,103.3 227.7,111.7 226.0,130.0 C224.3,148.3 216.7,170.0 212.0,190.0 C207.3,210.0 201.3,226.7 198.0,250.0 C194.7,273.3 197.5,314.2 192.0,330.0 C186.5,345.8 168.7,401.7 165.0,345.0 C161.3,288.3 161.8,49.2 170.0,-10.0Z" fill="#3a1f17" opacity="0.7" />
<path d="M170.0,310.0 C180.8,303.0 208.3,334.7 230.0,343.0 C251.7,351.3 277.5,361.3 300.0,360.0 C322.5,358.7 352.5,330.8 365.0,335.0 C377.5,339.2 408.3,376.7 375.0,385.0 C341.7,393.3 199.2,397.5 165.0,385.0 C130.8,372.5 159.2,317.0 170.0,310.0Z" fill="#3e241b" opacity="0.85" />
<path d="M262.0,-5.0 C276.7,-12.5 333.3,-12.5 350.0,-5.0 C366.7,2.5 365.3,28.8 362.0,40.0 C358.7,51.2 342.8,59.0 330.0,62.0 C317.2,65.0 296.3,61.7 285.0,58.0 C273.7,54.3 265.8,50.5 262.0,40.0 C258.2,29.5 247.3,2.5 262.0,-5.0Z" fill="#dcb29e" opacity="0.75" />
<path d="M248.0,158.0 C258.3,150.2 287.7,143.5 300.0,148.0 C312.3,152.5 321.7,171.7 322.0,185.0 C322.3,198.3 313.0,220.8 302.0,228.0 C291.0,235.2 266.7,233.5 256.0,228.0 C245.3,222.5 239.3,206.7 238.0,195.0 C236.7,183.3 237.7,165.8 248.0,158.0Z" fill="#cea292" opacity="0.8" />
<path d="M300.0,300.0 C306.7,292.5 341.3,294.2 350.0,300.0 C358.7,305.8 358.7,327.5 352.0,335.0 C345.3,342.5 318.7,350.8 310.0,345.0 C301.3,339.2 293.3,307.5 300.0,300.0Z" fill="#a87a6a" opacity="0.6" />
</g>
<g filter="url(#b5n)">
<path d="M224.0,100.0 C229.3,93.0 246.3,92.7 260.0,92.0 C273.7,91.3 295.0,93.0 306.0,96.0 C317.0,99.0 327.0,104.3 326.0,110.0 C325.0,115.7 311.8,125.3 300.0,130.0 C288.2,134.7 267.0,137.3 255.0,138.0 C243.0,138.7 233.2,140.3 228.0,134.0 C222.8,127.7 218.7,107.0 224.0,100.0Z" fill="#6e4632" opacity="0.6" />
<path d="M354.0,88.0 C359.7,79.7 383.7,64.7 390.0,70.0 C396.3,75.3 394.7,109.3 392.0,120.0 C389.3,130.7 380.0,134.0 374.0,134.0 C368.0,134.0 359.3,127.7 356.0,120.0 C352.7,112.3 348.3,96.3 354.0,88.0Z" fill="#4a2a1e" opacity="0.75" />
<path d="M328.0,130.0 C333.0,122.0 345.3,115.3 350.0,122.0 C354.7,128.7 356.7,156.7 356.0,170.0 C355.3,183.3 351.3,195.7 346.0,202.0 C340.7,208.3 328.3,213.3 324.0,208.0 C319.7,202.7 319.3,183.0 320.0,170.0 C320.7,157.0 323.0,138.0 328.0,130.0Z" fill="#9a6a58" opacity="0.5" />
<path d="M366.0,146.0 C369.0,142.2 378.0,155.7 382.0,163.0 C386.0,170.3 390.3,183.5 390.0,190.0 C389.7,196.5 384.3,202.7 380.0,202.0 C375.7,201.3 366.3,195.3 364.0,186.0 C361.7,176.7 363.0,149.8 366.0,146.0Z" fill="#d6a696" opacity="0.8" />
<path d="M326.0,208.0 C334.7,204.0 360.3,208.3 368.0,213.0 C375.7,217.7 376.7,230.3 372.0,236.0 C367.3,241.7 349.3,246.8 340.0,247.0 C330.7,247.2 318.3,243.5 316.0,237.0 C313.7,230.5 317.3,212.0 326.0,208.0Z" fill="#86574a" opacity="0.6" />
<path d="M318.0,300.0 C324.0,297.3 355.3,296.0 362.0,298.0 C368.7,300.0 364.0,309.3 358.0,312.0 C352.0,314.7 332.7,316.0 326.0,314.0 C319.3,312.0 312.0,302.7 318.0,300.0Z" fill="#7a4c40" opacity="0.6" />
</g>
</g>
<g filter="url(#b5n)">
<path d="M105.0,-8.0 C124.2,-19.3 183.0,-21.8 200.0,-8.0 C217.0,5.8 205.0,52.8 207.0,75.0 C209.0,97.2 213.5,105.8 212.0,125.0 C210.5,144.2 203.3,168.3 198.0,190.0 C192.7,211.7 183.7,236.7 180.0,255.0 C176.3,273.3 175.7,286.7 176.0,300.0 C176.3,313.3 186.3,326.7 182.0,335.0 C177.7,343.3 165.3,342.5 150.0,350.0 C134.7,357.5 116.3,371.7 90.0,380.0 C63.7,388.3 8.3,421.7 -8.0,400.0 C-24.3,378.3 -16.8,291.7 -8.0,250.0 C0.8,208.3 29.5,181.7 45.0,150.0 C60.5,118.3 75.0,86.3 85.0,60.0 C95.0,33.7 85.8,3.3 105.0,-8.0Z" fill="#080302" />
<path d="M132.0,-8.0 C140.7,-22.7 173.3,-22.7 182.0,-8.0 C190.7,6.7 185.0,52.0 184.0,80.0 C183.0,108.0 181.3,131.7 176.0,160.0 C170.7,188.3 161.0,221.7 152.0,250.0 C143.0,278.3 134.3,314.2 122.0,330.0 C109.7,345.8 80.3,358.3 78.0,345.0 C75.7,331.7 99.7,280.8 108.0,250.0 C116.3,219.2 124.3,188.3 128.0,160.0 C131.7,131.7 129.3,108.0 130.0,80.0 C130.7,52.0 123.3,6.7 132.0,-8.0Z" fill="url(#ghbn)" opacity="0.9" />
<path d="M145.0,-8.0 C150.0,-22.7 167.5,-24.3 172.0,-8.0 C176.5,8.3 174.0,60.3 172.0,90.0 C170.0,119.7 165.3,160.0 160.0,170.0 C154.7,180.0 143.0,165.0 140.0,150.0 C137.0,135.0 141.2,106.3 142.0,80.0 C142.8,53.7 140.0,6.7 145.0,-8.0Z" fill="#2a160f" opacity="0.35" />
<path d="M190.0,-8.0 C192.8,-19.3 208.5,-21.8 213.0,-8.0 C217.5,5.8 215.5,52.8 217.0,75.0 C218.5,97.2 223.5,107.8 222.0,125.0 C220.5,142.2 212.7,170.2 208.0,178.0 C203.3,185.8 195.3,181.7 194.0,172.0 C192.7,162.3 199.7,138.7 200.0,120.0 C200.3,101.3 197.7,81.3 196.0,60.0 C194.3,38.7 187.2,3.3 190.0,-8.0Z" fill="url(#ghfn)" opacity="0.95" />
<path d="M384.0,-8.0 C399.7,-14.8 462.3,-24.7 478.0,-8.0 C493.7,8.7 482.3,73.3 478.0,92.0 C473.7,110.7 460.3,102.7 452.0,104.0 C443.7,105.3 435.7,99.0 428.0,100.0 C420.3,101.0 411.7,111.3 406.0,110.0 C400.3,108.7 396.8,99.3 394.0,92.0 C391.2,84.7 390.7,75.8 389.0,66.0 C387.3,56.2 384.8,45.3 384.0,33.0 C383.2,20.7 368.3,-1.2 384.0,-8.0Z" fill="#2e1912" />
<path d="M415.0,-8.0 C424.7,-14.3 467.5,-22.7 478.0,-8.0 C488.5,6.7 482.7,63.3 478.0,80.0 C473.3,96.7 458.0,93.7 450.0,92.0 C442.0,90.3 435.0,80.3 430.0,70.0 C425.0,59.7 422.5,43.0 420.0,30.0 C417.5,17.0 405.3,-1.7 415.0,-8.0Z" fill="#553628" opacity="0.7" />
<path d="M374.0,-8.0 C376.8,-14.8 391.3,-19.3 396.0,-8.0 C400.7,3.3 401.3,42.0 402.0,60.0 C402.7,78.0 402.3,90.0 400.0,100.0 C397.7,110.0 390.5,125.0 388.0,120.0 C385.5,115.0 386.5,84.5 385.0,70.0 C383.5,55.5 380.8,46.0 379.0,33.0 C377.2,20.0 371.2,-1.2 374.0,-8.0Z" fill="#0a0302" />
<path d="M392.0,205.0 C399.5,203.3 415.0,200.5 425.0,205.0 C435.0,209.5 443.2,222.5 452.0,232.0 C460.8,241.5 473.7,226.5 478.0,262.0 C482.3,297.5 486.8,417.0 478.0,445.0 C469.2,473.0 440.5,440.0 425.0,430.0 C409.5,420.0 393.8,403.3 385.0,385.0 C376.2,366.7 374.2,340.8 372.0,320.0 C369.8,299.2 370.7,277.5 372.0,260.0 C373.3,242.5 376.7,224.2 380.0,215.0 C383.3,205.8 384.5,206.7 392.0,205.0Z" fill="#1f0f0a" />
<path d="M420.0,240.0 C429.7,232.5 468.3,248.3 478.0,275.0 C487.7,301.7 484.3,382.5 478.0,400.0 C471.7,417.5 449.7,393.3 440.0,380.0 C430.3,366.7 423.3,343.3 420.0,320.0 C416.7,296.7 410.3,247.5 420.0,240.0Z" fill="#301a12" opacity="0.6" />
<path d="M372.0,330.0 C377.8,326.7 388.7,361.7 400.0,380.0 C411.3,398.3 443.3,428.3 440.0,440.0 C436.7,451.7 392.5,456.7 380.0,450.0 C367.5,443.3 366.3,420.0 365.0,400.0 C363.7,380.0 366.2,333.3 372.0,330.0Z" fill="#0c0403" opacity="0.8" />
<path d="M240.0,372.0 C249.2,369.5 283.3,380.0 300.0,380.0 C316.7,380.0 328.0,377.0 340.0,372.0 C352.0,367.0 364.5,345.3 372.0,350.0 C379.5,354.7 385.0,380.0 385.0,400.0 C385.0,420.0 380.3,458.7 372.0,470.0 C363.7,481.3 346.2,474.7 335.0,468.0 C323.8,461.3 316.7,439.7 305.0,430.0 C293.3,420.3 275.0,415.8 265.0,410.0 C255.0,404.2 249.2,401.3 245.0,395.0 C240.8,388.7 230.8,374.5 240.0,372.0Z" fill="#1c0d08" />
<path d="M-8.0,412.0 C1.8,410.0 32.5,423.7 51.0,440.0 C69.5,456.3 85.8,486.7 103.0,510.0 C120.2,533.3 136.8,556.7 154.0,580.0 C171.2,603.3 190.8,628.0 206.0,650.0 C221.2,672.0 259.3,701.7 245.0,712.0 C230.7,722.3 143.7,722.2 120.0,712.0 C96.3,701.8 108.2,671.5 103.0,651.0 C97.8,630.5 94.7,606.2 89.0,589.0 C83.3,571.8 78.2,563.3 69.0,548.0 C59.8,532.7 46.8,513.0 34.0,497.0 C21.2,481.0 -1.0,466.2 -8.0,452.0 C-15.0,437.8 -17.8,414.0 -8.0,412.0Z" fill="#1a0c08" />
<path d="M-8.0,428.0 C0.0,429.2 24.5,445.0 40.0,462.0 C55.5,479.0 70.8,505.3 85.0,530.0 C99.2,554.7 112.5,579.7 125.0,610.0 C137.5,640.3 160.8,695.0 160.0,712.0 C159.2,729.0 129.5,722.2 120.0,712.0 C110.5,701.8 108.2,671.5 103.0,651.0 C97.8,630.5 94.7,606.2 89.0,589.0 C83.3,571.8 78.2,563.3 69.0,548.0 C59.8,532.7 46.8,512.5 34.0,497.0 C21.2,481.5 -1.0,466.5 -8.0,455.0 C-15.0,443.5 -16.0,426.8 -8.0,428.0Z" fill="#3a2016" opacity="0.85" />
</g>
<g filter="url(#b2n)">
<path d="M-10.0,448.0 C-4.7,409.7 12.7,472.7 22.0,484.0 C31.3,495.3 38.0,504.0 46.0,516.0 C54.0,528.0 63.0,543.0 70.0,556.0 C77.0,569.0 83.0,582.0 88.0,594.0 C93.0,606.0 96.3,617.0 100.0,628.0 C103.7,639.0 105.7,645.7 110.0,660.0 C114.3,674.3 146.0,705.0 126.0,714.0 C106.0,723.0 12.7,758.3 -10.0,714.0 C-32.7,669.7 -15.3,486.3 -10.0,448.0Z" fill="url(#gshln)" />
</g>
<clipPath id="cshn"><path d="M-10.0,448.0 C-4.7,409.7 12.7,472.7 22.0,484.0 C31.3,495.3 38.0,504.0 46.0,516.0 C54.0,528.0 63.0,543.0 70.0,556.0 C77.0,569.0 83.0,582.0 88.0,594.0 C93.0,606.0 96.3,617.0 100.0,628.0 C103.7,639.0 105.7,645.7 110.0,660.0 C114.3,674.3 146.0,705.0 126.0,714.0 C106.0,723.0 12.7,758.3 -10.0,714.0 C-32.7,669.7 -15.3,486.3 -10.0,448.0Z"/></clipPath>
<g clip-path="url(#cshn)"><g filter="url(#b5n)">
<path d="M-8.0,448.0 C-1.0,450.3 21.2,474.7 34.0,490.0 C46.8,505.3 59.8,524.2 69.0,540.0 C78.2,555.8 83.3,567.5 89.0,585.0 C94.7,602.5 97.2,623.8 103.0,645.0 C108.8,666.2 123.8,700.8 124.0,712.0 C124.2,723.2 110.0,722.3 104.0,712.0 C98.0,701.7 93.0,669.3 88.0,650.0 C83.0,630.7 79.7,612.3 74.0,596.0 C68.3,579.7 62.7,567.0 54.0,552.0 C45.3,537.0 32.3,518.7 22.0,506.0 C11.7,493.3 -3.0,485.7 -8.0,476.0 C-13.0,466.3 -15.0,445.7 -8.0,448.0Z" fill="#5e3a2c" opacity="0.55" />
</g></g>
<g filter="url(#b8n)">
<path d="M350.0,480.0 C353.0,470.8 365.3,496.7 372.0,505.0 C378.7,513.3 386.7,515.8 390.0,530.0 C393.3,544.2 389.7,572.3 392.0,590.0 C394.3,607.7 406.0,626.3 404.0,636.0 C402.0,645.7 387.7,647.3 380.0,648.0 C372.3,648.7 362.3,654.7 358.0,640.0 C353.7,625.3 355.3,586.7 354.0,560.0 C352.7,533.3 347.0,489.2 350.0,480.0Z" fill="#120705" opacity="0.95" />
</g>
<g filter="url(#b3n)">
<path d="M396.0,672.0 C401.3,661.7 411.0,655.0 420.0,650.0 C429.0,645.0 440.3,643.7 450.0,642.0 C459.7,640.3 473.3,628.3 478.0,640.0 C482.7,651.7 493.0,700.0 478.0,712.0 C463.0,724.0 401.7,718.7 388.0,712.0 C374.3,705.3 390.7,682.3 396.0,672.0Z" fill="#25130d" />
</g>
<g filter="url(#b5n)">
<path d="M125.0,388.0 C129.5,380.3 142.5,365.3 147.0,374.0 C151.5,382.7 147.8,420.7 152.0,440.0 C156.2,459.3 162.0,473.3 172.0,490.0 C182.0,506.7 208.7,529.0 212.0,540.0 C215.3,551.0 203.3,560.7 192.0,556.0 C180.7,551.3 155.3,527.2 144.0,512.0 C132.7,496.8 128.0,480.3 124.0,465.0 C120.0,449.7 119.8,432.8 120.0,420.0 C120.2,407.2 120.5,395.7 125.0,388.0Z" fill="#34190f" />
</g>
<g filter="url(#b2n)">
<path d="M160.0,470.0 C167.5,461.3 198.3,468.3 215.0,470.0 C231.7,471.7 241.2,479.5 260.0,480.0 C278.8,480.5 313.5,468.2 328.0,473.0 C342.5,477.8 342.2,495.3 347.0,509.0 C351.8,522.7 355.8,539.7 357.0,555.0 C358.2,570.3 354.2,584.7 354.0,601.0 C353.8,617.3 355.8,634.5 356.0,653.0 C356.2,671.5 373.5,702.2 355.0,712.0 C336.5,721.8 262.2,721.8 245.0,712.0 C227.8,702.2 249.7,669.3 252.0,653.0 C254.3,636.7 260.5,624.8 259.0,614.0 C257.5,603.2 251.2,597.8 243.0,588.0 C234.8,578.2 222.2,566.0 210.0,555.0 C197.8,544.0 178.3,536.2 170.0,522.0 C161.7,507.8 152.5,478.7 160.0,470.0Z" fill="url(#ghandn)" />
<path d="M183.0,352.0 C185.5,342.0 199.8,347.8 203.0,360.0 C206.2,372.2 204.5,415.0 202.0,425.0 C199.5,435.0 191.2,432.2 188.0,420.0 C184.8,407.8 180.5,362.0 183.0,352.0Z" fill="#6a4238" />
<path d="M155.0,340.0 C158.7,334.5 162.2,335.0 166.0,335.0 C169.8,335.0 175.0,334.0 178.0,340.0 C181.0,346.0 182.7,360.0 184.0,371.0 C185.3,382.0 183.7,395.2 186.0,406.0 C188.3,416.8 192.0,423.3 198.0,436.0 C204.0,448.7 221.7,471.3 222.0,482.0 C222.3,492.7 207.2,498.5 200.0,500.0 C192.8,501.5 185.7,498.0 179.0,491.0 C172.3,484.0 165.3,469.0 160.0,458.0 C154.7,447.0 149.7,440.0 147.0,425.0 C144.3,410.0 142.7,382.2 144.0,368.0 C145.3,353.8 151.3,345.5 155.0,340.0Z" fill="url(#gf1n)" />
<path d="M205.0,356.0 C207.7,351.0 211.5,350.2 215.0,350.0 C218.5,349.8 223.0,351.5 226.0,355.0 C229.0,358.5 231.3,361.0 233.0,371.0 C234.7,381.0 233.2,401.3 236.0,415.0 C238.8,428.7 243.5,440.8 250.0,453.0 C256.5,465.2 274.7,479.3 275.0,488.0 C275.3,496.7 259.8,504.5 252.0,505.0 C244.2,505.5 235.2,498.2 228.0,491.0 C220.8,483.8 213.7,471.2 209.0,462.0 C204.3,452.8 201.7,449.7 200.0,436.0 C198.3,422.3 198.2,393.3 199.0,380.0 C199.8,366.7 202.3,361.0 205.0,356.0Z" fill="url(#gf1n)" />
<path d="M256.0,382.0 C257.7,378.5 261.3,377.0 264.0,377.0 C266.7,377.0 269.3,378.7 272.0,382.0 C274.7,385.3 277.2,391.2 280.0,397.0 C282.8,402.8 285.5,408.7 289.0,417.0 C292.5,425.3 295.5,437.7 301.0,447.0 C306.5,456.3 315.8,465.0 322.0,473.0 C328.2,481.0 341.7,489.7 338.0,495.0 C334.3,500.3 309.0,505.7 300.0,505.0 C291.0,504.3 289.2,498.2 284.0,491.0 C278.8,483.8 273.3,471.2 269.0,462.0 C264.7,452.8 260.5,446.7 258.0,436.0 C255.5,425.3 254.3,407.0 254.0,398.0 C253.7,389.0 254.3,385.5 256.0,382.0Z" fill="url(#gf1n)" />
</g>
<g filter="url(#b3n)">
<path d="M186.0,410.0 C186.7,406.7 193.3,426.3 200.0,440.0 C206.7,453.7 223.7,483.0 226.0,492.0 C228.3,501.0 219.0,499.3 214.0,494.0 C209.0,488.7 200.7,474.0 196.0,460.0 C191.3,446.0 185.3,413.3 186.0,410.0Z" fill="#2a140f" opacity="0.8" />
<path d="M238.0,420.0 C239.0,416.7 248.7,428.0 256.0,440.0 C263.3,452.0 279.7,483.0 282.0,492.0 C284.3,501.0 275.3,499.3 270.0,494.0 C264.7,488.7 255.3,472.3 250.0,460.0 C244.7,447.7 237.0,423.3 238.0,420.0Z" fill="#2a140f" opacity="0.8" />
<path d="M245.0,600.0 C255.0,579.7 290.8,571.3 300.0,590.0 C309.2,608.7 310.0,691.7 300.0,712.0 C290.0,732.3 249.2,730.7 240.0,712.0 C230.8,693.3 235.0,620.3 245.0,600.0Z" fill="#2a1510" opacity="0.5" />
</g>
<g filter="url(#b8n)">
<path d="M205.0,545.0 C209.2,537.5 229.5,564.2 240.0,575.0 C250.5,585.8 263.7,587.2 268.0,610.0 C272.3,632.8 274.8,695.0 266.0,712.0 C257.2,729.0 223.5,727.3 215.0,712.0 C206.5,696.7 216.7,647.8 215.0,620.0 C213.3,592.2 200.8,552.5 205.0,545.0Z" fill="#050202" opacity="0.9" />
<path d="M300.0,610.0 C310.0,591.3 341.3,583.0 350.0,600.0 C358.7,617.0 362.0,693.3 352.0,712.0 C342.0,730.7 298.7,729.0 290.0,712.0 C281.3,695.0 290.0,628.7 300.0,610.0Z" fill="#7a5040" opacity="0.35" />
</g>
<g filter="url(#b1n)">
<path d="M156.0,341.0 C157.3,338.3 161.8,336.2 165.0,336.0 C168.2,335.8 173.3,337.7 175.0,340.0 C176.7,342.3 176.5,347.5 175.0,350.0 C173.5,352.5 169.0,354.7 166.0,355.0 C163.0,355.3 158.7,354.3 157.0,352.0 C155.3,349.7 154.7,343.7 156.0,341.0Z" fill="#c6a49e" />
<path d="M206.0,356.0 C207.3,353.2 212.0,351.2 215.0,351.0 C218.0,350.8 222.5,352.5 224.0,355.0 C225.5,357.5 225.5,363.3 224.0,366.0 C222.5,368.7 217.8,370.7 215.0,371.0 C212.2,371.3 208.5,370.5 207.0,368.0 C205.5,365.5 204.7,358.8 206.0,356.0Z" fill="#c6a49e" />
<path d="M257.0,382.0 C258.0,379.5 261.7,378.0 264.0,378.0 C266.3,378.0 269.8,379.8 271.0,382.0 C272.2,384.2 272.2,388.8 271.0,391.0 C269.8,393.2 266.2,394.7 264.0,395.0 C261.8,395.3 259.2,395.2 258.0,393.0 C256.8,390.8 256.0,384.5 257.0,382.0Z" fill="#bc9a94" />
</g>
<g filter="url(#b1n)">
<path d="M212,80 C230,69 258,65 288,67 C306,69 320,74 329,84 C322,86 312,84 300,82 C280,79 250,78 228,82 C222,83 216,83 212,80Z" fill="#3c261e"/>
<path d="M360,84 C368,76 378,70 387,64 L389,73 C381,78 372,84 364,90Z" fill="#30190f"/>
<path d="M226,127 C245,120 262,114 280,112 C288,112 294,114 298,116 C288,120 276,126 262,128 C250,130 238,130 226,127Z" fill="#2a140c"/>
<path d="M226,121 C245,110 268,104 282,105 C290,106 295,110 298,114" fill="none" stroke="#5a3424" stroke-width="1.600" opacity=".8"/>
<ellipse cx="271" cy="119" rx="7" ry="4.5" fill="#3c2010"/>
<ellipse cx="258" cy="123" rx="5" ry="2.2" fill="#94807a"/>
<path d="M358,112 C366,108 374,106 382,108 C378,114 370,119 362,120Z" fill="#2a140c"/>
<ellipse cx="362" cy="113" rx="2.5" ry="2" fill="#a8968c"/>
<ellipse cx="353" cy="208" rx="11" ry="3.5" fill="#5a2c22" transform="rotate(-8 353 208)"/>
<path d="M298,270 C312,262 332,252 352,246 C362,243 372,243 377,247 C376,254 372,259 366,263 C350,262 330,266 314,272Z" fill="#b4746c"/>
<path d="M302,274 C320,278 345,276 366,266 C371,272 371,282 366,292 C356,300 336,302 320,296 C312,290 306,282 302,274Z" fill="#c08078"/>
<path d="M314,272 C330,266 350,262 366,263 C362,270 350,275 334,277 C326,277 318,275 314,272Z" fill="#3a1410"/>
<path d="M332,268 C342,264 354,263 362,264 C358,269 348,271 338,271Z" fill="#cfc6c2"/>
</g>
<clipPath id="chln"><path d="M100.0,-8.0 C118.8,-19.3 180.5,-21.8 198.0,-8.0 C215.5,5.8 203.0,52.8 205.0,75.0 C207.0,97.2 211.5,105.8 210.0,125.0 C208.5,144.2 201.3,168.3 196.0,190.0 C190.7,211.7 181.7,236.7 178.0,255.0 C174.3,273.3 174.0,286.7 174.0,300.0 C174.0,313.3 182.0,326.7 178.0,335.0 C174.0,343.3 164.7,341.7 150.0,350.0 C135.3,358.3 116.3,375.8 90.0,385.0 C63.7,394.2 8.3,425.8 -8.0,405.0 C-24.3,384.2 -16.8,302.5 -8.0,260.0 C0.8,217.5 29.5,183.3 45.0,150.0 C60.5,116.7 75.8,86.3 85.0,60.0 C94.2,33.7 81.2,3.3 100.0,-8.0Z"/></clipPath>
<g clip-path="url(#chln)" opacity=".42" mask="url(#mtmn)"><g transform="rotate(9 150 0)"><rect x="-200" y="-100" width="600" height="620" filter="url(#htxn)"/></g></g>
<clipPath id="chrn"><path d="M386.0,-8.0 C401.3,-14.8 462.7,-24.7 478.0,-8.0 C493.3,8.7 482.3,73.3 478.0,92.0 C473.7,110.7 460.3,102.7 452.0,104.0 C443.7,105.3 435.7,99.0 428.0,100.0 C420.3,101.0 411.3,111.3 406.0,110.0 C400.7,108.7 398.5,99.3 396.0,92.0 C393.5,84.7 392.7,75.8 391.0,66.0 C389.3,56.2 386.8,45.3 386.0,33.0 C385.2,20.7 370.7,-1.2 386.0,-8.0Z"/></clipPath>
<g clip-path="url(#chrn)" opacity=".9"><g transform="rotate(-14 430 0)"><rect x="300" y="-60" width="260" height="240" filter="url(#htxn)"/></g></g>
<clipPath id="chr2n"><path d="M392.0,208.0 C399.2,206.3 415.0,203.7 425.0,208.0 C435.0,212.3 443.2,224.7 452.0,234.0 C460.8,243.3 473.7,228.8 478.0,264.0 C482.3,299.2 486.8,417.3 478.0,445.0 C469.2,472.7 440.5,440.0 425.0,430.0 C409.5,420.0 393.5,403.3 385.0,385.0 C376.5,366.7 375.8,340.8 374.0,320.0 C372.2,299.2 372.7,277.0 374.0,260.0 C375.3,243.0 379.0,226.7 382.0,218.0 C385.0,209.3 384.8,209.7 392.0,208.0Z"/></clipPath>
<g clip-path="url(#chr2n)" opacity=".4"><g transform="rotate(-4 430 300)"><rect x="300" y="150" width="260" height="340" filter="url(#htxn)"/></g></g>
<clipPath id="chbn"><path d="M-8.0,420.0 C1.8,418.5 32.5,430.3 51.0,446.0 C69.5,461.7 85.8,491.0 103.0,514.0 C120.2,537.0 136.8,560.7 154.0,584.0 C171.2,607.3 191.7,632.7 206.0,654.0 C220.3,675.3 254.0,702.3 240.0,712.0 C226.0,721.7 144.7,722.2 122.0,712.0 C99.3,701.8 109.3,671.5 104.0,651.0 C98.7,630.5 95.7,606.2 90.0,589.0 C84.3,571.8 79.2,563.3 70.0,548.0 C60.8,532.7 48.0,512.5 35.0,497.0 C22.0,481.5 -0.8,467.8 -8.0,455.0 C-15.2,442.2 -17.8,421.5 -8.0,420.0Z"/></clipPath>
<g clip-path="url(#chbn)" opacity=".5"><g transform="rotate(-30 60 500)"><rect x="-200" y="300" width="560" height="560" filter="url(#htxn)"/></g></g>
<g filter="url(#b1n)" opacity=".12">
<path d="M147.8,-5.0 C148.4,10.8 153.8,55.8 151.6,90.0 C149.4,124.2 139.9,160.0 134.5,200.0 C129.2,240.0 128.0,293.3 119.4,330.0 C110.8,366.7 89.2,405.0 83.2,420.0" fill="none" stroke="#5a3424" stroke-width="1.2" stroke-linecap="round"/>
<path d="M123.3,-5.0 C122.7,10.8 122.1,55.8 119.8,90.0 C117.5,124.2 116.5,160.0 109.4,200.0 C102.4,240.0 90.5,293.3 77.5,330.0 C64.4,366.7 39.0,405.0 31.3,420.0" fill="none" stroke="#5a3424" stroke-width="1.1" stroke-linecap="round"/>
<path d="M168.7,-5.0 C169.2,10.8 171.7,55.8 171.5,90.0 C171.2,124.2 171.7,160.0 167.2,200.0 C162.8,240.0 154.1,293.3 144.8,330.0 C135.5,366.7 116.8,405.0 111.1,420.0" fill="none" stroke="#5a3424" stroke-width="1.5" stroke-linecap="round"/>
<path d="M154.5,-5.0 C153.9,10.8 153.6,55.8 151.1,90.0 C148.5,124.2 150.0,160.0 139.1,200.0 C128.2,240.0 104.5,293.3 85.7,330.0 C66.9,366.7 36.2,405.0 26.3,420.0" fill="none" stroke="#6a4230" stroke-width="1.3" stroke-linecap="round"/>
<path d="M167.7,-5.0 C168.2,10.8 172.4,55.8 170.5,90.0 C168.5,124.2 164.6,160.0 155.9,200.0 C147.3,240.0 133.0,293.3 118.8,330.0 C104.6,366.7 78.8,405.0 70.8,420.0" fill="none" stroke="#5a3424" stroke-width="1.5" stroke-linecap="round"/>
<path d="M176.8,-5.0 C177.2,10.8 182.1,55.8 179.4,90.0 C176.6,124.2 167.3,160.0 160.3,200.0 C153.3,240.0 148.4,293.3 137.5,330.0 C126.7,366.7 102.2,405.0 95.1,420.0" fill="none" stroke="#5a3424" stroke-width="1.5" stroke-linecap="round"/>
<path d="M163.7,-5.0 C164.6,10.8 171.3,55.8 169.0,90.0 C166.7,124.2 158.5,160.0 149.8,200.0 C141.1,240.0 130.0,293.3 116.6,330.0 C103.3,366.7 77.5,405.0 69.7,420.0" fill="none" stroke="#3a2016" stroke-width="1.2" stroke-linecap="round"/>
<path d="M140.9,-5.0 C141.7,10.8 148.5,55.8 146.2,90.0 C144.0,124.2 133.2,160.0 127.3,200.0 C121.5,240.0 119.9,293.3 111.0,330.0 C102.2,366.7 80.2,405.0 74.0,420.0" fill="none" stroke="#6a4230" stroke-width="1.4" stroke-linecap="round"/>
<path d="M198.5,-5.0 C198.4,10.8 199.7,55.8 198.0,90.0 C196.2,124.2 197.4,160.0 188.1,200.0 C178.7,240.0 158.2,293.3 141.8,330.0 C125.3,366.7 98.1,405.0 89.3,420.0" fill="none" stroke="#5a3424" stroke-width="1.4" stroke-linecap="round"/>
<path d="M133.2,-5.0 C134.4,10.8 142.3,55.8 140.4,90.0 C138.4,124.2 128.9,160.0 121.4,200.0 C114.0,240.0 106.7,293.3 95.4,330.0 C84.1,366.7 60.8,405.0 53.8,420.0" fill="none" stroke="#5a3424" stroke-width="1.7" stroke-linecap="round"/>
<path d="M170.7,-5.0 C170.7,10.8 173.1,55.8 170.5,90.0 C167.8,124.2 165.4,160.0 154.8,200.0 C144.2,240.0 124.2,293.3 106.8,330.0 C89.4,366.7 59.7,405.0 50.3,420.0" fill="none" stroke="#3a2016" stroke-width="1.5" stroke-linecap="round"/>
<path d="M160.0,-5.0 C161.2,10.8 170.3,55.8 167.3,90.0 C164.3,124.2 153.5,160.0 141.9,200.0 C130.3,240.0 114.4,293.3 97.8,330.0 C81.2,366.7 51.5,405.0 42.3,420.0" fill="none" stroke="#5a3424" stroke-width="0.9" stroke-linecap="round"/>
<path d="M182.5,-5.0 C183.9,10.8 192.3,55.8 190.5,90.0 C188.6,124.2 181.4,160.0 171.3,200.0 C161.2,240.0 145.1,293.3 129.8,330.0 C114.6,366.7 88.1,405.0 79.7,420.0" fill="none" stroke="#6a4230" stroke-width="1.7" stroke-linecap="round"/>
<path d="M199.6,-5.0 C200.8,10.8 209.0,55.8 206.9,90.0 C204.8,124.2 194.6,160.0 187.0,200.0 C179.5,240.0 172.8,293.3 161.6,330.0 C150.4,366.7 126.8,405.0 119.9,420.0" fill="none" stroke="#5a3424" stroke-width="1.4" stroke-linecap="round"/>
<path d="M138.1,-5.0 C138.9,10.8 144.8,55.8 142.9,90.0 C141.1,124.2 133.5,160.0 126.8,200.0 C120.2,240.0 113.6,293.3 103.0,330.0 C92.3,366.7 69.6,405.0 62.9,420.0" fill="none" stroke="#3a2016" stroke-width="0.9" stroke-linecap="round"/>
<path d="M159.3,-5.0 C160.4,10.8 167.6,55.8 165.9,90.0 C164.3,124.2 158.6,160.0 149.5,200.0 C140.4,240.0 125.6,293.3 111.4,330.0 C97.2,366.7 71.9,405.0 64.0,420.0" fill="none" stroke="#6a4230" stroke-width="1.6" stroke-linecap="round"/>
<path d="M208.8,-5.0 C208.8,10.8 212.5,55.8 209.3,90.0 C206.2,124.2 199.1,160.0 190.0,200.0 C180.8,240.0 168.8,293.3 154.3,330.0 C139.8,366.7 111.7,405.0 103.2,420.0" fill="none" stroke="#5a3424" stroke-width="1.0" stroke-linecap="round"/>
<path d="M139.3,-5.0 C139.6,10.8 142.5,55.8 141.2,90.0 C139.8,124.2 136.9,160.0 131.1,200.0 C125.4,240.0 117.4,293.3 106.9,330.0 C96.4,366.7 74.8,405.0 68.4,420.0" fill="none" stroke="#6a4230" stroke-width="1.1" stroke-linecap="round"/>
<path d="M131.4,-5.0 C132.0,10.8 137.3,55.8 134.7,90.0 C132.1,124.2 124.2,160.0 115.7,200.0 C107.3,240.0 97.3,293.3 84.2,330.0 C71.1,366.7 45.1,405.0 37.2,420.0" fill="none" stroke="#4a2a1c" stroke-width="1.6" stroke-linecap="round"/>
<path d="M165.4,-5.0 C166.1,10.8 172.9,55.8 169.5,90.0 C166.2,124.2 154.7,160.0 145.4,200.0 C136.2,240.0 127.6,293.3 114.2,330.0 C100.7,366.7 73.1,405.0 64.9,420.0" fill="none" stroke="#3a2016" stroke-width="1.3" stroke-linecap="round"/>
<path d="M154.3,-5.0 C154.4,10.8 157.8,55.8 155.1,90.0 C152.3,124.2 145.4,160.0 137.8,200.0 C130.2,240.0 121.9,293.3 109.7,330.0 C97.4,366.7 71.8,405.0 64.2,420.0" fill="none" stroke="#4a2a1c" stroke-width="1.3" stroke-linecap="round"/>
<path d="M128.1,-5.0 C127.7,10.8 127.6,55.8 125.3,90.0 C123.1,124.2 122.4,160.0 114.5,200.0 C106.6,240.0 92.0,293.3 77.7,330.0 C63.4,366.7 37.0,405.0 28.9,420.0" fill="none" stroke="#5a3424" stroke-width="1.9" stroke-linecap="round"/>
<path d="M446.0,-5.0 C445.5,2.5 442.3,21.7 443.0,40.0 C443.8,58.3 449.3,94.2 450.6,105.0" fill="none" stroke="#4a2a1c" stroke-width="1.0" stroke-linecap="round"/>
<path d="M418.9,-5.0 C419.1,2.5 418.4,21.7 419.8,40.0 C421.1,58.3 425.7,94.2 426.9,105.0" fill="none" stroke="#7a5038" stroke-width="1.0" stroke-linecap="round"/>
<path d="M436.6,-5.0 C438.2,2.5 444.5,21.7 446.3,40.0 C448.1,58.3 447.0,94.2 447.2,105.0" fill="none" stroke="#8a6048" stroke-width="0.9" stroke-linecap="round"/>
<path d="M407.7,-5.0 C407.8,2.5 407.5,21.7 408.5,40.0 C409.4,58.3 412.7,94.2 413.5,105.0" fill="none" stroke="#5a3424" stroke-width="1.5" stroke-linecap="round"/>
<path d="M415.4,-5.0 C416.9,2.5 423.4,21.7 424.7,40.0 C426.0,58.3 423.6,94.2 423.3,105.0" fill="none" stroke="#7a5038" stroke-width="1.9" stroke-linecap="round"/>
<path d="M422.4,-5.0 C423.2,2.5 427.0,21.7 427.4,40.0 C427.7,58.3 424.9,94.2 424.4,105.0" fill="none" stroke="#8a6048" stroke-width="1.5" stroke-linecap="round"/>
<path d="M468.1,-5.0 C468.3,2.5 468.3,21.7 469.1,40.0 C469.9,58.3 472.4,94.2 473.0,105.0" fill="none" stroke="#8a6048" stroke-width="1.7" stroke-linecap="round"/>
<path d="M446.0,-5.0 C447.2,2.5 450.2,21.7 453.0,40.0 C455.8,58.3 461.1,94.2 462.7,105.0" fill="none" stroke="#5a3424" stroke-width="1.9" stroke-linecap="round"/>
<path d="M461.4,-5.0 C462.4,2.5 466.9,21.7 467.7,40.0 C468.6,58.3 466.6,94.2 466.4,105.0" fill="none" stroke="#4a2a1c" stroke-width="1.3" stroke-linecap="round"/>
<path d="M402.2,-5.0 C401.6,2.5 397.5,21.7 398.6,40.0 C399.6,58.3 406.7,94.2 408.3,105.0" fill="none" stroke="#8a6048" stroke-width="1.1" stroke-linecap="round"/>
<path d="M445.4,-5.0 C445.5,2.5 443.2,21.7 446.2,40.0 C449.2,58.3 460.3,94.2 463.2,105.0" fill="none" stroke="#8a6048" stroke-width="2.1" stroke-linecap="round"/>
<path d="M427.3,-5.0 C427.2,2.5 425.6,21.7 426.4,40.0 C427.3,58.3 431.4,94.2 432.3,105.0" fill="none" stroke="#5a3424" stroke-width="1.3" stroke-linecap="round"/>
<path d="M436.2,-5.0 C437.8,2.5 443.8,21.7 446.0,40.0 C448.2,58.3 449.0,94.2 449.6,105.0" fill="none" stroke="#7a5038" stroke-width="1.5" stroke-linecap="round"/>
<path d="M449.0,-5.0 C450.2,2.5 455.9,21.7 456.2,40.0 C456.5,58.3 451.7,94.2 450.8,105.0" fill="none" stroke="#7a5038" stroke-width="2.1" stroke-linecap="round"/>
<path d="M458.7,-5.0 C459.8,2.5 463.4,21.7 465.2,40.0 C466.9,58.3 468.5,94.2 469.2,105.0" fill="none" stroke="#5a3424" stroke-width="1.4" stroke-linecap="round"/>
<path d="M447.7,-5.0 C447.2,2.5 441.4,21.7 444.9,40.0 C448.4,58.3 464.6,94.2 468.5,105.0" fill="none" stroke="#4a2a1c" stroke-width="1.4" stroke-linecap="round"/>
<path d="M66.6,413.4 C76.6,428.4 109.1,471.7 126.6,503.4 C144.1,535.1 159.1,568.4 171.6,603.4 C184.1,638.4 196.6,695.1 201.6,713.4" fill="none" stroke="#4a2a1c" stroke-width="1.0" stroke-linecap="round"/>
<path d="M-13.5,416.0 C-3.5,431.0 29.0,474.4 46.5,506.0 C64.0,537.7 79.0,571.0 91.5,606.0 C104.0,641.0 116.5,697.7 121.5,716.0" fill="none" stroke="#6a4230" stroke-width="1.8" stroke-linecap="round"/>
<path d="M-11.0,443.1 C-1.0,458.1 31.5,501.4 49.0,533.1 C66.5,564.7 81.5,598.1 94.0,633.1 C106.5,668.1 119.0,724.7 124.0,743.1" fill="none" stroke="#6a4230" stroke-width="1.6" stroke-linecap="round"/>
<path d="M15.6,431.9 C25.6,446.9 58.1,490.3 75.6,521.9 C93.1,553.6 108.1,586.9 120.6,621.9 C133.1,656.9 145.6,713.6 150.6,731.9" fill="none" stroke="#4a2a1c" stroke-width="0.8" stroke-linecap="round"/>
<path d="M73.9,439.1 C83.9,454.1 116.4,497.4 133.9,529.1 C151.4,560.7 166.4,594.1 178.9,629.1 C191.4,664.1 203.9,720.7 208.9,739.1" fill="none" stroke="#5a3424" stroke-width="1.4" stroke-linecap="round"/>
<path d="M91.4,427.4 C101.4,442.4 133.9,485.7 151.4,517.4 C168.9,549.0 183.9,582.4 196.4,617.4 C208.9,652.4 221.4,709.0 226.4,727.4" fill="none" stroke="#4a2a1c" stroke-width="1.8" stroke-linecap="round"/>
<path d="M-2.6,420.1 C7.4,435.1 39.9,478.4 57.4,510.1 C74.9,541.7 89.9,575.1 102.4,610.1 C114.9,645.1 127.4,701.7 132.4,720.1" fill="none" stroke="#3a2016" stroke-width="1.4" stroke-linecap="round"/>
<path d="M69.3,423.0 C79.3,438.0 111.8,481.4 129.3,513.0 C146.8,544.7 161.8,578.0 174.3,613.0 C186.8,648.0 199.3,704.7 204.3,723.0" fill="none" stroke="#6a4230" stroke-width="1.8" stroke-linecap="round"/>
<path d="M-22.1,439.6 C-12.1,454.6 20.4,497.9 37.9,529.6 C55.4,561.3 70.4,594.6 82.9,629.6 C95.4,664.6 107.9,721.3 112.9,739.6" fill="none" stroke="#6a4230" stroke-width="1.6" stroke-linecap="round"/>
<path d="M76.0,430.7 C86.0,445.7 118.5,489.0 136.0,520.7 C153.5,552.3 168.5,585.7 181.0,620.7 C193.5,655.7 206.0,712.3 211.0,730.7" fill="none" stroke="#4a2a1c" stroke-width="1.4" stroke-linecap="round"/>
<path d="M38.1,410.7 C48.1,425.7 80.6,469.1 98.1,500.7 C115.6,532.4 130.6,565.7 143.1,600.7 C155.6,635.7 168.1,692.4 173.1,710.7" fill="none" stroke="#6a4230" stroke-width="1.7" stroke-linecap="round"/>
<path d="M49.1,441.0 C59.1,456.0 91.6,499.4 109.1,531.0 C126.6,562.7 141.6,596.0 154.1,631.0 C166.6,666.0 179.1,722.7 184.1,741.0" fill="none" stroke="#4a2a1c" stroke-width="1.0" stroke-linecap="round"/>
<path d="M31.6,439.0 C41.6,454.0 74.1,497.3 91.6,529.0 C109.1,560.7 124.1,594.0 136.6,629.0 C149.1,664.0 161.6,720.7 166.6,739.0" fill="none" stroke="#5a3424" stroke-width="1.2" stroke-linecap="round"/>
<path d="M37.4,432.2 C47.4,447.2 79.9,490.6 97.4,522.2 C114.9,553.9 129.9,587.2 142.4,622.2 C154.9,657.2 167.4,713.9 172.4,732.2" fill="none" stroke="#5a3424" stroke-width="1.9" stroke-linecap="round"/>
<path d="M-22.6,417.7 C-12.6,432.7 19.9,476.0 37.4,507.7 C54.9,539.3 69.9,572.7 82.4,607.7 C94.9,642.7 107.4,699.3 112.4,717.7" fill="none" stroke="#5a3424" stroke-width="1.7" stroke-linecap="round"/>
<path d="M36.0,432.5 C46.0,447.5 78.5,490.8 96.0,522.5 C113.5,554.1 128.5,587.5 141.0,622.5 C153.5,657.5 166.0,714.1 171.0,732.5" fill="none" stroke="#5a3424" stroke-width="1.3" stroke-linecap="round"/>
<path d="M49.6,430.2 C59.6,445.2 92.1,488.6 109.6,520.2 C127.1,551.9 142.1,585.2 154.6,620.2 C167.1,655.2 179.6,711.9 184.6,730.2" fill="none" stroke="#4a2a1c" stroke-width="1.6" stroke-linecap="round"/>
<path d="M28.8,431.3 C38.8,446.3 71.3,489.7 88.8,521.3 C106.3,553.0 121.3,586.3 133.8,621.3 C146.3,656.3 158.8,713.0 163.8,731.3" fill="none" stroke="#6a4230" stroke-width="1.4" stroke-linecap="round"/>
<path d="M2.2,430.9 C12.2,445.9 44.7,489.3 62.2,520.9 C79.7,552.6 94.7,585.9 107.2,620.9 C119.7,655.9 132.2,712.6 137.2,730.9" fill="none" stroke="#3a2016" stroke-width="1.9" stroke-linecap="round"/>
<path d="M86.1,418.1 C96.1,433.1 128.6,476.4 146.1,508.1 C163.6,539.8 178.6,573.1 191.1,608.1 C203.6,643.1 216.1,699.8 221.1,718.1" fill="none" stroke="#6a4230" stroke-width="1.0" stroke-linecap="round"/>
<path d="M399.7,232.7 C398.3,245.6 394.2,275.4 391.3,310.0 C388.5,344.6 384.1,418.3 382.7,440.0" fill="none" stroke="#4a2a1c" stroke-width="1.1" stroke-linecap="round"/>
<path d="M414.2,219.9 C415.4,234.9 420.3,273.3 421.3,310.0 C422.3,346.7 420.4,418.3 420.2,440.0" fill="none" stroke="#5a3424" stroke-width="1.6" stroke-linecap="round"/>
<path d="M401.4,250.3 C403.3,260.3 415.7,278.4 412.7,310.0 C409.8,341.6 388.5,418.3 383.7,440.0" fill="none" stroke="#4a2a1c" stroke-width="1.3" stroke-linecap="round"/>
<path d="M429.0,254.6 C430.4,263.8 440.6,279.1 437.3,310.0 C434.0,340.9 414.0,418.3 409.3,440.0" fill="none" stroke="#3a2016" stroke-width="2.0" stroke-linecap="round"/>
<path d="M422.3,231.9 C421.9,244.9 423.8,275.3 420.2,310.0 C416.5,344.7 403.6,418.3 400.3,440.0" fill="none" stroke="#3a2016" stroke-width="0.8" stroke-linecap="round"/>
<path d="M434.3,232.6 C432.7,245.5 427.1,275.4 424.7,310.0 C422.4,344.6 421.0,418.3 420.3,440.0" fill="none" stroke="#5a3424" stroke-width="1.2" stroke-linecap="round"/>
<path d="M466.9,219.5 C468.6,234.6 480.0,273.3 477.1,310.0 C474.2,346.7 454.0,418.3 449.4,440.0" fill="none" stroke="#4a2a1c" stroke-width="0.9" stroke-linecap="round"/>
<path d="M411.8,251.2 C410.8,261.0 405.8,278.5 405.7,310.0 C405.7,341.5 410.7,418.3 411.7,440.0" fill="none" stroke="#3a2016" stroke-width="1.8" stroke-linecap="round"/>
<path d="M444.1,252.8 C443.9,262.4 444.2,278.8 443.0,310.0 C441.8,341.2 437.8,418.3 436.8,440.0" fill="none" stroke="#5a3424" stroke-width="1.5" stroke-linecap="round"/>
<path d="M446.0,218.6 C444.6,233.8 437.7,273.1 437.3,310.0 C436.9,346.9 442.7,418.3 443.7,440.0" fill="none" stroke="#3a2016" stroke-width="1.9" stroke-linecap="round"/>
<path d="M411.5,215.7 C410.2,231.4 406.2,272.6 403.5,310.0 C400.7,347.4 396.5,418.3 395.1,440.0" fill="none" stroke="#5a3424" stroke-width="1.8" stroke-linecap="round"/>
<path d="M395.3,249.5 C395.3,259.6 397.6,278.3 395.3,310.0 C393.0,341.7 383.8,418.3 381.5,440.0" fill="none" stroke="#5a3424" stroke-width="1.3" stroke-linecap="round"/>
<path d="M463.2,239.9 C461.7,251.6 454.4,276.6 454.2,310.0 C453.9,343.4 460.4,418.3 461.6,440.0" fill="none" stroke="#4a2a1c" stroke-width="2.0" stroke-linecap="round"/>
<path d="M411.0,222.2 C412.7,236.9 422.2,273.7 421.5,310.0 C420.8,346.3 409.2,418.3 406.7,440.0" fill="none" stroke="#5a3424" stroke-width="1.7" stroke-linecap="round"/>
</g>
</g>
</svg>
<div class="abs" style="left:1188px;top:453px;width:231px;height:1px;background:#b4b4b4"></div>
<div class="abs" style="left:1189px;top:456px;width:58px;height:13px;background:#fff;overflow:hidden"><div class="t" style="left:4px;top:5px;font-size:12px">12.5%</div></div>
<svg class="abs" style="left:1291px;top:460px" width="12" height="8" viewBox="0 0 12 8"><path d="M1,7L4.500,2.500L6.500,5L8,3.500L11,7Z" fill="#fff" stroke="#222" stroke-width="1"/></svg>
<div class="abs" style="left:1313px;top:463px;width:75px;height:2px;background:#b0b0b0;border-bottom:1px solid #fafafa"></div>
<div class="abs" style="left:1336px;top:458px;width:8px;height:12px;background:linear-gradient(90deg,#f6f6f6,#cfcfcf);border:1px solid #6a6a6a;border-radius:4px 4px 1px 1px"></div>
<svg class="abs" style="left:1396px;top:457px" width="20" height="11" viewBox="0 0 20 11"><path d="M1,10L7,2.500L10,6.500L13,3L19,10Z" fill="#fff" stroke="#222" stroke-width="1.200"/></svg>
<svg class="abs" style="left:1424px;top:459px" width="11" height="11" viewBox="0 0 11 11"><g fill="#9a9a9a"><rect x="9" y="1" width="1" height="1"/><rect x="7" y="3" width="1" height="1"/><rect x="9" y="3" width="1" height="1"/><rect x="5" y="5" width="1" height="1"/><rect x="7" y="5" width="1" height="1"/><rect x="9" y="5" width="1" height="1"/><rect x="3" y="7" width="1" height="1"/><rect x="5" y="7" width="1" height="1"/><rect x="7" y="7" width="1" height="1"/><rect x="9" y="7" width="1" height="1"/><rect x="1" y="9" width="1" height="1"/><rect x="3" y="9" width="1" height="1"/><rect x="5" y="9" width="1" height="1"/><rect x="7" y="9" width="1" height="1"/><rect x="9" y="9" width="1" height="1"/></g></svg>
<div class="abs" style="left:1186px;top:477px;width:250px;height:33px;background:#ededed;border-radius:4px 4px 2px 2px"></div>
<div class="abs" style="left:1186px;top:477px;width:250px;height:26px;background:linear-gradient(180deg,#f4f4f4 0,#e6e6e6 35%,#cdcdcd 100%);border-radius:4px 4px 0 0"></div>
<div class="abs" style="left:1192px;top:485px;width:44px;height:18px;background:#ededed;border:1px solid #a0a0a0;border-bottom:none;border-radius:5px 5px 0 0;box-shadow:inset 1px 1px 0 #fafafa"></div>
<div class="t" style="left:1199px;top:490px;font-size:11px;color:#111">颜色</div>
<svg class="abs" style="left:1223px;top:492px" width="8" height="8"><path d="M0.500,0.500L7,7M7,0.500L0.500,7" stroke="#666" stroke-width="1.100"/></svg>
<div class="abs" style="left:1238px;top:485px;width:35px;height:17px;background:linear-gradient(180deg,#ececec,#cfcfcf);border:1px solid #a0a0a0;border-bottom:none;border-radius:5px 5px 0 0;box-shadow:inset 1px 1px 0 #f6f6f6"></div>
<div class="t" style="left:1244px;top:490px;font-size:11px;color:#111">色板</div>
<div class="abs" style="left:1275px;top:485px;width:35px;height:17px;background:linear-gradient(180deg,#ececec,#cfcfcf);border:1px solid #a0a0a0;border-bottom:none;border-radius:5px 5px 0 0;box-shadow:inset 1px 1px 0 #f6f6f6"></div>
<div class="t" style="left:1281px;top:490px;font-size:11px;color:#111">样式</div>
<div class="abs" style="left:1186px;top:502px;width:250px;height:1px;background:#a8a8a8"></div>
<div class="abs" style="left:1192px;top:502px;width:44px;height:1px;background:#ededed"></div>
<div class="abs" style="left:1412px;top:481px;width:8px;height:6px;border:1px solid #555;border-top-width:2px"></div>
<svg class="abs" style="left:1424px;top:480px" width="9" height="9"><path d="M0.500,0.500L8,8M8,0.500L0.500,8" stroke="#666" stroke-width="1.200"/></svg>
<svg class="abs" style="left:1410px;top:492px" width="26" height="11" viewBox="0 0 26 11"><path d="M0,11L9,1.500Q10,0.500 12,0.500H26V11Z" fill="#ededed"/><path d="M0,11L9,1.500Q10,0.500 12,0.500H26" fill="none" stroke="#a8a8a8"/><path d="M9.500,4.500H14.500L12,7.500Z" fill="#333"/><path d="M16,3.500H23M16,6H23M16,8.500H23" stroke="#444" stroke-width="1.100"/></svg>
<div class="abs" style="left:1186px;top:513px;width:250px;height:338px;background:#ededed;border-radius:4px 4px 2px 2px"></div>
<div class="abs" style="left:1186px;top:513px;width:250px;height:26px;background:linear-gradient(180deg,#f4f4f4 0,#e6e6e6 35%,#cdcdcd 100%);border-radius:4px 4px 0 0"></div>
<div class="abs" style="left:1192px;top:521px;width:44px;height:18px;background:#ededed;border:1px solid #a0a0a0;border-bottom:none;border-radius:5px 5px 0 0;box-shadow:inset 1px 1px 0 #fafafa"></div>
<div class="t" style="left:1199px;top:526px;font-size:11px;color:#111">图层</div>
<svg class="abs" style="left:1223px;top:528px" width="8" height="8"><path d="M0.500,0.500L7,7M7,0.500L0.500,7" stroke="#666" stroke-width="1.100"/></svg>
<div class="abs" style="left:1238px;top:521px;width:35px;height:17px;background:linear-gradient(180deg,#ececec,#cfcfcf);border:1px solid #a0a0a0;border-bottom:none;border-radius:5px 5px 0 0;box-shadow:inset 1px 1px 0 #f6f6f6"></div>
<div class="t" style="left:1244px;top:526px;font-size:11px;color:#111">通道</div>
<div class="abs" style="left:1275px;top:521px;width:35px;height:17px;background:linear-gradient(180deg,#ececec,#cfcfcf);border:1px solid #a0a0a0;border-bottom:none;border-radius:5px 5px 0 0;box-shadow:inset 1px 1px 0 #f6f6f6"></div>
<div class="t" style="left:1281px;top:526px;font-size:11px;color:#111">路径</div>
<div class="abs" style="left:1186px;top:538px;width:250px;height:1px;background:#a8a8a8"></div>
<div class="abs" style="left:1192px;top:538px;width:44px;height:1px;background:#ededed"></div>
<div class="abs" style="left:1412px;top:520px;width:7px;height:2px;background:#666"></div>
<svg class="abs" style="left:1424px;top:516px" width="9" height="9"><path d="M0.500,0.500L8,8M8,0.500L0.500,8" stroke="#666" stroke-width="1.200"/></svg>
<svg class="abs" style="left:1410px;top:528px" width="26" height="11" viewBox="0 0 26 11"><path d="M0,11L9,1.500Q10,0.500 12,0.500H26V11Z" fill="#ededed"/><path d="M0,11L9,1.500Q10,0.500 12,0.500H26" fill="none" stroke="#a8a8a8"/><path d="M9.500,4.500H14.500L12,7.500Z" fill="#333"/><path d="M16,3.500H23M16,6H23M16,8.500H23" stroke="#444" stroke-width="1.100"/></svg>
<div class="abs" style="left:1191px;top:543px;width:91px;height:20px;background:#fff;border:1px solid #f6f6f6;border-radius:2px"></div>
<div class="t" style="left:1197px;top:548px;font-size:12px">正常</div>
<svg class="abs" style="left:1270px;top:551px" width="9" height="5"><path d="M0,0H8L4,4.500Z" fill="#111"/></svg>
<div class="t" style="left:1286px;top:547px;font-size:12px">不透明度:</div>
<div class="abs" style="left:1340px;top:544px;width:56px;height:19px;border:1px solid #9c9c9c;background:#fff"></div>
<div class="abs" style="left:1378px;top:545px;width:17px;height:17px;background:linear-gradient(180deg,#f4f4f4,#d0d0d0);border-left:1px solid #9c9c9c"></div>
<svg class="abs" style="left:1384px;top:550px" width="5" height="8"><path d="M0.500,0.500L4.500,4L0.500,7.500Z" fill="#4a5a8a"/></svg>
<div class="t" style="left:1344px;top:548px;font-size:12px;letter-spacing:-.4px">100%</div>
<div class="abs" style="left:1188px;top:565px;width:231px;height:1px;background:#c4c4c4"></div>
<div class="t" style="left:1193px;top:574px;font-size:12px">锁定:</div>
<svg class="abs" style="left:1228px;top:573px" width="12" height="12" viewBox="0 0 12 12"><rect x=".5" y=".5" width="11" height="11" fill="#fff" stroke="#666"/><rect x="1" y="1" width="5" height="5" fill="#bbb"/><rect x="6" y="6" width="5" height="5" fill="#bbb"/></svg>
<svg class="abs" style="left:1244px;top:571px" width="14" height="15" viewBox="0 0 14 15"><path d="M13,1L6,8L7.500,9.500Z" fill="#333"/><path d="M6,8C4,8 3.500,10.500 1,12C4,13.500 7,12 7.500,9.500Z" fill="#777" stroke="#333" stroke-width=".7"/></svg>
<svg class="abs" style="left:1261px;top:572px" width="14" height="14" viewBox="0 0 14 14"><path d="M7,1V13M1,7H13" stroke="#222" stroke-width="1.300"/><path d="M7,0L4.800,3H9.200ZM7,14L4.800,11H9.200ZM0,7L3,4.800V9.200ZM14,7L11,4.800V9.200Z" fill="#222"/></svg>
<svg class="abs" style="left:1279px;top:572px" width="12" height="13" viewBox="0 0 12 13"><path d="M3,6V4A3,3 0 0 1 9,4V6" fill="none" stroke="#333" stroke-width="1.600"/><rect x="1.500" y="6" width="9" height="6.500" rx="1" fill="#333"/></svg>
<div class="t" style="left:1310px;top:574px;font-size:12px">填充:</div>
<div class="abs" style="left:1340px;top:571px;width:56px;height:19px;border:1px solid #9c9c9c;background:#fff"></div>
<div class="abs" style="left:1378px;top:572px;width:17px;height:17px;background:linear-gradient(180deg,#f4f4f4,#d0d0d0);border-left:1px solid #9c9c9c"></div>
<svg class="abs" style="left:1384px;top:577px" width="5" height="8"><path d="M0.500,0.500L4.500,4L0.500,7.500Z" fill="#4a5a8a"/></svg>
<div class="t" style="left:1344px;top:575px;font-size:12px;letter-spacing:-.4px">100%</div>
<div class="abs" style="left:1188px;top:592px;width:231px;height:1px;background:#c4c4c4"></div>
<div class="abs" style="left:1211px;top:593px;width:208px;height:39px;background:#3399ff"></div>
<div class="abs" style="left:1210px;top:593px;width:1px;height:78px;background:#c4c4c4"></div>
<div class="abs" style="left:1188px;top:632px;width:23px;height:1px;background:#c4c4c4"></div>
<div class="abs" style="left:1188px;top:671px;width:231px;height:1px;background:#b8b8b8"></div>
<div class="abs" style="left:1419px;top:593px;width:1px;height:240px;background:#d8d8d8"></div>
<div class="abs" style="left:1191px;top:604px;width:16px;height:16px;background:#f8f8f8;border:1px solid #dcdcdc"></div>
<svg class="abs" style="left:1192px;top:607px" width="14" height="10" viewBox="0 0 14 10"><path d="M0.500,5C3,1 11,1 13.500,5C11,9 3,9 0.500,5Z" fill="#fff" stroke="#333" stroke-width="1"/><circle cx="7" cy="4.800" r="2.800" fill="#222"/><path d="M1,3.500C4,0.500 10,0.500 13,3.500" stroke="#222" stroke-width="1.500" fill="none"/></svg>
<div class="abs" style="left:1191px;top:643px;width:16px;height:16px;background:#f8f8f8;border:1px solid #dcdcdc"></div>
<svg class="abs" style="left:1192px;top:646px" width="14" height="10" viewBox="0 0 14 10"><path d="M0.500,5C3,1 11,1 13.500,5C11,9 3,9 0.500,5Z" fill="#fff" stroke="#333" stroke-width="1"/><circle cx="7" cy="4.800" r="2.800" fill="#222"/><path d="M1,3.500C4,0.500 10,0.500 13,3.500" stroke="#222" stroke-width="1.500" fill="none"/></svg>
<div class="abs" style="left:1212px;top:594px;width:26px;height:37px;background:#fff;border:1px solid #000"></div>
<svg class="abs" style="left:1214px;top:596px" width="22" height="33"><use href="#pht" width="22" height="33"/></svg>
<svg class="abs" style="left:1214px;top:634px" width="22" height="34"><use href="#pht" width="22" height="34"/></svg>
<div class="t" style="left:1243px;top:607px;font-size:12px;color:#fff">图层 1</div>
<div class="t" style="left:1246px;top:645px;font-size:12px;color:#000;font-style:italic;transform:skewX(-12deg)">背景</div>
<svg class="abs" style="left:1393px;top:644px" width="11" height="13" viewBox="0 0 11 13"><path d="M3,6V4A2.500,2.500 0 0 1 8,4V6" fill="none" stroke="#444" stroke-width="1.300"/><rect x="1.500" y="6" width="8" height="6" rx="1" fill="#e8e8e8" stroke="#444" stroke-width="1"/></svg>
<svg class="abs" style="left:1423px;top:597px" width="10" height="6"><path d="M0.500,5.500L5,0.500L9.500,5.500Z" fill="#9a9a9a"/></svg>
<svg class="abs" style="left:1423px;top:821px" width="10" height="6"><path d="M0.500,0.500L5,5.500L9.500,0.500Z" fill="#9a9a9a"/></svg>
<div class="abs" style="left:1188px;top:833px;width:231px;height:1px;background:#a8a8a8"></div>
<svg class="abs" style="left:1234px;top:836px" width="19" height="10" viewBox="0 0 19 10"><rect x="1" y="2" width="9" height="6" rx="3" fill="none" stroke="#8a8a8a" stroke-width="1.400"/><rect x="9" y="2" width="9" height="6" rx="3" fill="none" stroke="#8a8a8a" stroke-width="1.400"/><path d="M6,5H13" stroke="#8a8a8a" stroke-width="1.400"/></svg>
<div class="t" style="left:1264px;top:833px;font-family:'Liberation Serif',serif;font-style:italic;font-weight:bold;font-size:15px;color:#333">fx</div>
<svg class="abs" style="left:1279px;top:845px" width="5" height="3"><path d="M0,0H4L2,2.500Z" fill="#222"/></svg>
<svg class="abs" style="left:1291px;top:835px" width="15" height="12" viewBox="0 0 15 12"><rect x=".5" y=".5" width="14" height="11" fill="#9a9a9a" stroke="#333"/><circle cx="7.500" cy="6" r="3.200" fill="#fff" stroke="#333" stroke-width=".8"/></svg>
<svg class="abs" style="left:1318px;top:834px" width="14" height="14" viewBox="0 0 14 14"><circle cx="7" cy="7" r="5.800" fill="#fff" stroke="#333" stroke-width="1.100"/><path d="M11.100,2.900A5.800,5.800 0 0 0 2.900,11.100Z" fill="#333"/></svg>
<svg class="abs" style="left:1333px;top:845px" width="5" height="3"><path d="M0,0H4L2,2.500Z" fill="#222"/></svg>
<svg class="abs" style="left:1345px;top:835px" width="14" height="11" viewBox="0 0 14 11"><path d="M0.500,2.500V10.500H12.500V1.500H6L5,0.500H1.500Z" fill="#e4e4e4" stroke="#555"/><path d="M2,10.500H13.500V3" stroke="#999" fill="none"/></svg>
<svg class="abs" style="left:1372px;top:835px" width="13" height="13" viewBox="0 0 13 13"><path d="M3.500,0.500H11.500V9.500H3.500Z" fill="#f6f6f6" stroke="#444"/><path d="M0.500,5.500H7.500V12.500H0.500Z" fill="#fff" stroke="#444"/><path d="M8,9.500H11.500" stroke="#444"/></svg>
<svg class="abs" style="left:1400px;top:834px" width="12" height="14" viewBox="0 0 12 14"><path d="M1,3.500H11M4,3V1.500H8V3" fill="none" stroke="#333" stroke-width="1.300"/><path d="M2,5H10L9,13H3Z" fill="#e8e8e8" stroke="#333" stroke-width="1.100"/><path d="M4.500,6.500V11.500M6,6.500V11.500M7.500,6.500V11.500" stroke="#333" stroke-width=".9"/></svg>
<svg class="abs" style="left:1424px;top:838px" width="11" height="11" viewBox="0 0 11 11"><g fill="#9a9a9a"><rect x="9" y="1" width="1" height="1"/><rect x="7" y="3" width="1" height="1"/><rect x="9" y="3" width="1" height="1"/><rect x="5" y="5" width="1" height="1"/><rect x="7" y="5" width="1" height="1"/><rect x="9" y="5" width="1" height="1"/><rect x="3" y="7" width="1" height="1"/><rect x="5" y="7" width="1" height="1"/><rect x="7" y="7" width="1" height="1"/><rect x="9" y="7" width="1" height="1"/><rect x="1" y="9" width="1" height="1"/><rect x="3" y="9" width="1" height="1"/><rect x="5" y="9" width="1" height="1"/><rect x="7" y="9" width="1" height="1"/><rect x="9" y="9" width="1" height="1"/></g></svg>
<div class="abs" style="left:1181px;top:289px;width:216px;height:143px;background:#9a9a9a;border-radius:4px;box-shadow:0 1px 3px rgba(0,0,0,.5)"></div>
<div class="abs" style="left:1182px;top:289px;width:214px;height:142px;background:#ededed;border-radius:4px 4px 2px 2px"></div>
<div class="abs" style="left:1182px;top:289px;width:214px;height:26px;background:linear-gradient(180deg,#f4f4f4 0,#e6e6e6 35%,#cdcdcd 100%);border-radius:4px 4px 0 0"></div>
<div class="abs" style="left:1188px;top:297px;width:67px;height:18px;background:#ededed;border:1px solid #a0a0a0;border-bottom:none;border-radius:5px 5px 0 0;box-shadow:inset 1px 1px 0 #fafafa"></div>
<div class="t" style="left:1195px;top:302px;font-size:11px;color:#111">历史记录</div>
<svg class="abs" style="left:1242px;top:304px" width="8" height="8"><path d="M0.500,0.500L7,7M7,0.500L0.500,7" stroke="#666" stroke-width="1.100"/></svg>
<div class="abs" style="left:1182px;top:314px;width:214px;height:1px;background:#a8a8a8"></div>
<div class="abs" style="left:1188px;top:314px;width:67px;height:1px;background:#ededed"></div>
<div class="abs" style="left:1372px;top:296px;width:7px;height:2px;background:#666"></div>
<svg class="abs" style="left:1384px;top:292px" width="9" height="9"><path d="M0.500,0.500L8,8M8,0.500L0.500,8" stroke="#666" stroke-width="1.200"/></svg>
<svg class="abs" style="left:1370px;top:304px" width="26" height="11" viewBox="0 0 26 11"><path d="M0,11L9,1.500Q10,0.500 12,0.500H26V11Z" fill="#ededed"/><path d="M0,11L9,1.500Q10,0.500 12,0.500H26" fill="none" stroke="#a8a8a8"/><path d="M9.500,4.500H14.500L12,7.500Z" fill="#333"/><path d="M16,3.500H23M16,6H23M16,8.500H23" stroke="#444" stroke-width="1.100"/></svg>
<div class="abs" style="left:1186px;top:318px;width:193px;height:37px;background:#ededed"></div>
<div class="abs" style="left:1188px;top:328px;width:16px;height:16px;background:#f8f8f8;border:1px solid #cfcfcf"></div>
<svg class="abs" style="left:1189px;top:329px" width="14" height="14" viewBox="0 0 14 14"><path d="M12,2L6,8L7.500,9.500Z" fill="#333"/><path d="M6,8C4,8 4,10 2,11C4.500,12.500 7,11.500 7.500,9.500Z" fill="#666"/><path d="M10,7A4.500,4.500 0 1 1 5,3" fill="none" stroke="#444" stroke-width="1" stroke-dasharray="1.400 1"/></svg>
<div class="abs" style="left:1206px;top:318px;width:1px;height:80px;background:#c8c8c8"></div>
<svg class="abs" style="left:1209px;top:320px" width="22" height="32"><use href="#pht" width="22" height="32"/></svg>
<div class="t" style="left:1235px;top:329px;font-size:12px">原片.jpg</div>
<div class="abs" style="left:1186px;top:355px;width:193px;height:1px;background:#b0b0b0"></div>
<div class="abs" style="left:1186px;top:357px;width:193px;height:1px;background:#b0b0b0"></div>
<div class="abs" style="left:1207px;top:378px;width:172px;height:20px;background:#3399ff"></div>
<div class="abs" style="left:1188px;top:361px;width:15px;height:15px;background:#f6f6f6;border:1px solid #d0d0d0"></div>
<div class="abs" style="left:1188px;top:380px;width:15px;height:15px;background:#f6f6f6;border:1px solid #d0d0d0"></div>
<svg class="abs" style="left:1216px;top:360px" width="17" height="16" viewBox="0 0 17 16"><path d="M1,1.500H7L8,3H12.500V14.500H1Z" fill="#f4f4f4" stroke="#666" stroke-width="1"/><rect x="1" y="0.500" width="6" height="2.500" fill="#888"/><path d="M3,6H10.500M3,8.500H10.500M3,11H10.500" stroke="#333" stroke-width="1.200"/><path d="M11,10L16,13L11,15.500Z" fill="#111"/></svg>
<svg class="abs" style="left:1216px;top:380px" width="17" height="16" viewBox="0 0 17 16"><path d="M1,1.500H7L8,3H12.500V14.500H1Z" fill="#f4f4f4" stroke="#666" stroke-width="1"/><rect x="1" y="0.500" width="6" height="2.500" fill="#888"/><path d="M3,6H10.500M3,8.500H10.500M3,11H10.500" stroke="#333" stroke-width="1.200"/><path d="M11,10L16,13L11,15.500Z" fill="#111"/></svg>
<svg class="abs" style="left:1203px;top:383px" width="11" height="11" viewBox="0 0 11 11"><path d="M1,1H5.500L10,5.500L5.500,10H1Z" fill="#fff" stroke="#111" stroke-width="1.300"/></svg>
<div class="t" style="left:1241px;top:362px;font-size:12px">打开</div>
<div class="t" style="left:1241px;top:381px;font-size:12px;color:#fff">通过拷贝的图层</div>
<div class="abs" style="left:1380px;top:318px;width:14px;height:96px;background:#f0f0f0"></div>
<svg class="abs" style="left:1382px;top:324px" width="10" height="6"><path d="M0.500,5.500L5,0.500L9.500,5.500Z" fill="#9a9a9a"/></svg>
<svg class="abs" style="left:1382px;top:403px" width="10" height="6"><path d="M0.500,0.500L5,5.500L9.500,0.500Z" fill="#9a9a9a"/></svg>
<div class="abs" style="left:1184px;top:414px;width:196px;height:1px;background:#a8a8a8"></div>
<svg class="abs" style="left:1301px;top:417px" width="12" height="11" viewBox="0 0 12 11"><rect x=".5" y=".5" width="11" height="10" fill="#fff" stroke="#444"/><rect x=".5" y=".5" width="11" height="2.500" fill="#666"/><rect x="2.500" y="5" width="7" height="4" fill="none" stroke="#666"/></svg>
<svg class="abs" style="left:1331px;top:416px" width="15" height="12" viewBox="0 0 15 12"><rect x=".5" y="2.500" width="14" height="9" rx="1" fill="#e8e8e8" stroke="#333"/><rect x="4" y=".5" width="5" height="2.500" fill="#555"/><circle cx="7.500" cy="7" r="2.800" fill="#fff" stroke="#333" stroke-width="1.200"/></svg>
<svg class="abs" style="left:1360px;top:415px" width="12" height="14" viewBox="0 0 12 14"><path d="M1,3.500H11M4,3V1.500H8V3" fill="none" stroke="#333" stroke-width="1.300"/><path d="M2,5H10L9,13H3Z" fill="#e8e8e8" stroke="#333" stroke-width="1.100"/><path d="M4.500,6.500V11.500M6,6.500V11.500M7.500,6.500V11.500" stroke="#333" stroke-width=".9"/></svg>
<svg class="abs" style="left:1383px;top:418px" width="11" height="11" viewBox="0 0 11 11"><g fill="#9a9a9a"><rect x="9" y="1" width="1" height="1"/><rect x="7" y="3" width="1" height="1"/><rect x="9" y="3" width="1" height="1"/><rect x="5" y="5" width="1" height="1"/><rect x="7" y="5" width="1" height="1"/><rect x="9" y="5" width="1" height="1"/><rect x="3" y="7" width="1" height="1"/><rect x="5" y="7" width="1" height="1"/><rect x="7" y="7" width="1" height="1"/><rect x="9" y="7" width="1" height="1"/><rect x="1" y="9" width="1" height="1"/><rect x="3" y="9" width="1" height="1"/><rect x="5" y="9" width="1" height="1"/><rect x="7" y="9" width="1" height="1"/><rect x="9" y="9" width="1" height="1"/></g></svg>
<!-- SCROLLBARS + STATUS -->
<div class="abs" style="left:1138px;top:77px;width:15px;height:768px;background:linear-gradient(90deg,#fdfdfd 0,#efefef 2px,#efefef 100%)"></div>
<svg class="abs" style="left:1141px;top:83px" width="10" height="6"><path d="M0.500,5.500L5,0.500L9.500,5.500Z" fill="#8e8e8e"/></svg>
<svg class="abs" style="left:1141px;top:834px" width="10" height="6"><path d="M0.500,0.500L5,5.500L9.500,0.500Z" fill="#8e8e8e"/></svg>
<div class="abs" style="left:46px;top:845px;width:1092px;height:9px;background:linear-gradient(180deg,#fdfdfd 0,#efefef 2px,#efefef 100%)"></div>
<div class="abs" style="left:1138px;top:845px;width:15px;height:9px;background:#fff"></div>
<div class="abs" style="left:46px;top:845px;width:47px;height:9px;background:#fff;overflow:hidden"><div class="t" style="left:5px;top:3px;font-size:12px">12.5%</div></div>
<div class="abs" style="left:93px;top:845px;width:207px;height:9px;background:#e4e4e4"></div>
<div class="abs" style="left:100px;top:847px;width:11px;height:11px;border-radius:6px;border:1.500px solid #777;background:#d6d6d6"></div>
<div class="abs" style="left:115px;top:845px;width:171px;height:9px;background:#efefef;border-left:1px solid #bdbdbd;border-right:1px solid #bdbdbd;overflow:hidden"><div class="t" style="left:36px;top:2px;font-size:12px;letter-spacing:-.4px">文档:60.2M/120.3M</div></div>
<svg class="abs" style="left:290px;top:847px" width="8" height="7"><path d="M0.500,0V12L7.500,6Z" fill="#111"/></svg>
<div class="abs" style="left:299px;top:845px;width:1px;height:9px;background:#c8c8c8"></div>
<svg class="abs" style="left:305px;top:849px" width="6" height="5"><path d="M5.500,0.500L0.500,5.500" stroke="#8e8e8e" stroke-width="1.500"/><path d="M5.500,0L0,5.500H5.500Z" fill="#8e8e8e"/></svg>
<svg class="abs" style="left:1127px;top:849px" width="6" height="5"><path d="M0.500,0L6,5.500H0.500Z" fill="#8e8e8e"/></svg>
<!-- CANVAS -->
<svg class="abs" id="photo" style="left:357px;top:109px" width="470" height="704" viewBox="0 0 470 704">
<defs>
    <filter id="b12" color-interpolation-filters="sRGB" x="-30%" y="-30%" width="160%" height="160%"><feGaussianBlur stdDeviation="12"/></filter>
    <filter id="b8" color-interpolation-filters="sRGB" x="-30%" y="-30%" width="160%" height="160%"><feGaussianBlur stdDeviation="8"/></filter>
    <filter id="b5" color-interpolation-filters="sRGB" x="-30%" y="-30%" width="160%" height="160%"><feGaussianBlur stdDeviation="5"/></filter>
    <filter id="b3" color-interpolation-filters="sRGB" x="-30%" y="-30%" width="160%" height="160%"><feGaussianBlur stdDeviation="3"/></filter>
    <filter id="b2" color-interpolation-filters="sRGB" x="-30%" y="-30%" width="160%" height="160%"><feGaussianBlur stdDeviation="1.6"/></filter>
    <filter id="b1" color-interpolation-filters="sRGB" x="-30%" y="-30%" width="160%" height="160%"><feGaussianBlur stdDeviation="0.8"/></filter>
    <linearGradient id="gface" x1="0" y1="0" x2="0" y2="1">
     <stop offset="0" stop-color="#b98d79"/><stop offset="0.5" stop-color="#b88b78"/><stop offset="0.66" stop-color="#ab7c6a"/><stop offset="0.82" stop-color="#875a4a"/><stop offset="1" stop-color="#5c392e"/>
    </linearGradient>
    <linearGradient id="gshl" x1="0" y1="0" x2="1" y2="0.25">
     <stop offset="0" stop-color="#a67a62"/><stop offset="0.55" stop-color="#9b705a"/><stop offset="1" stop-color="#5e3c2e"/>
    </linearGradient>
    <linearGradient id="ghand" x1="0" y1="0" x2="1" y2="0">
     <stop offset="0" stop-color="#2e1712"/><stop offset="0.45" stop-color="#52302a"/><stop offset="1" stop-color="#6e463a"/>
    </linearGradient>
    <linearGradient id="gf1" x1="0" y1="0" x2="0" y2="1">
     <stop offset="0" stop-color="#96685a"/><stop offset="0.5" stop-color="#86584a"/><stop offset="1" stop-color="#5a362c"/>
    </linearGradient>
    <linearGradient id="gshr" x1="0" y1="0" x2="1" y2="0">
     <stop offset="0" stop-color="#7a5040"/><stop offset="0.4" stop-color="#a07660"/><stop offset="1" stop-color="#94684f"/>
    </linearGradient>
    <linearGradient id="grh" gradientUnits="userSpaceOnUse" x1="392" y1="150" x2="476" y2="130">
 <stop offset="0" stop-color="#3e1c13"/><stop offset="0.3" stop-color="#683828"/><stop offset="0.7" stop-color="#84523c"/><stop offset="1" stop-color="#7c4c38"/>
</linearGradient>
<filter id="htx" color-interpolation-filters="sRGB" x="0" y="0" width="100%" height="100%">
 <feTurbulence type="fractalNoise" baseFrequency="0.35 0.004" numOctaves="3" seed="4" result="n"/>
 <feColorMatrix in="n" type="matrix" values="0 0 0 0 0.30  0 0 0 0 0.17  0 0 0 0 0.12  3.4 0 0 0 -1.7"/>
</filter>
<linearGradient id="ghb" gradientUnits="userSpaceOnUse" x1="0" y1="0" x2="0" y2="340">
 <stop offset="0" stop-color="#1e0f0a"/><stop offset="0.45" stop-color="#150a07"/><stop offset="0.75" stop-color="#0a0403"/><stop offset="1" stop-color="#060202"/>
</linearGradient>
<linearGradient id="ghf" gradientUnits="userSpaceOnUse" x1="0" y1="0" x2="0" y2="200">
 <stop offset="0" stop-color="#40261c"/><stop offset="0.6" stop-color="#321c14"/><stop offset="1" stop-color="#170b07"/>
</linearGradient>
<linearGradient id="gtm" gradientUnits="userSpaceOnUse" x1="0" y1="0" x2="0" y2="420">
 <stop offset="0" stop-color="#fff" stop-opacity="1"/><stop offset="0.4" stop-color="#fff" stop-opacity=".65"/><stop offset="0.65" stop-color="#fff" stop-opacity=".22"/><stop offset="0.8" stop-color="#fff" stop-opacity=".05"/><stop offset="1" stop-color="#fff" stop-opacity="0"/>
</linearGradient>
<mask id="mtm" maskUnits="userSpaceOnUse" x="-10" y="-10" width="490" height="724"><rect x="-10" y="-10" width="490" height="724" fill="url(#gtm)"/></mask>
<clipPath id="cpf"><rect x="0" y="0" width="470" height="704"/></clipPath>
    </defs>
<g clip-path="url(#cpf)">
<rect x="-5" y="-5" width="480" height="714" fill="#050202"/>
<g filter="url(#b3)">
<path d="M392.0,128.0 C393.8,118.5 398.7,113.0 405.0,108.0 C411.3,103.0 418.2,102.0 430.0,98.0 C441.8,94.0 468.3,56.7 476.0,84.0 C483.7,111.3 480.0,237.3 476.0,262.0 C472.0,286.7 460.0,241.0 452.0,232.0 C444.0,223.0 435.8,215.0 428.0,208.0 C420.2,201.0 410.7,197.2 405.0,190.0 C399.3,182.8 396.2,175.3 394.0,165.0 C391.8,154.7 390.2,137.5 392.0,128.0Z" fill="url(#grh)" />
<path d="M178.0,335.0 C188.0,327.0 219.7,345.8 240.0,352.0 C260.3,358.2 291.3,360.7 300.0,372.0 C308.7,383.3 298.3,408.7 292.0,420.0 C285.7,431.3 277.3,436.7 262.0,440.0 C246.7,443.3 213.7,446.7 200.0,440.0 C186.3,433.3 183.7,417.5 180.0,400.0 C176.3,382.5 168.0,343.0 178.0,335.0Z" fill="#583529" />
<path d="M336.0,445.0 C341.3,435.8 356.3,427.8 372.0,425.0 C387.7,422.2 412.7,425.5 430.0,428.0 C447.3,430.5 468.3,424.7 476.0,440.0 C483.7,455.3 487.8,505.8 476.0,520.0 C464.2,534.2 423.5,527.5 405.0,525.0 C386.5,522.5 375.8,512.5 365.0,505.0 C354.2,497.5 344.8,490.0 340.0,480.0 C335.2,470.0 330.7,454.2 336.0,445.0Z" fill="#65402f" />
<path d="M352.0,490.0 C360.2,468.3 395.3,498.3 405.0,515.0 C414.7,531.7 406.2,569.2 410.0,590.0 C413.8,610.8 430.5,630.0 428.0,640.0 C425.5,650.0 407.0,649.2 395.0,650.0 C383.0,650.8 363.2,671.7 356.0,645.0 C348.8,618.3 343.8,511.7 352.0,490.0Z" fill="#4e2c21" />
<path d="M432.0,455.0 C442.7,448.3 468.7,414.7 476.0,448.0 C483.3,481.3 482.0,624.3 476.0,655.0 C470.0,685.7 450.3,642.5 440.0,632.0 C429.7,621.5 420.0,608.2 414.0,592.0 C408.0,575.8 404.3,552.3 404.0,535.0 C403.7,517.7 407.3,501.3 412.0,488.0 C416.7,474.7 421.3,461.7 432.0,455.0Z" fill="url(#gshr)" />
<path d="M355.0,650.0 C362.5,637.7 382.2,637.7 395.0,638.0 C407.8,638.3 427.8,639.7 432.0,652.0 C436.2,664.3 433.7,702.0 420.0,712.0 C406.3,722.0 360.8,722.3 350.0,712.0 C339.2,701.7 347.5,662.3 355.0,650.0Z" fill="#b0866a" />
</g>
<g filter="url(#b2)">
<path d="M190.0,-6.0 C219.0,-12.5 340.3,-12.5 372.0,-6.0 C403.7,0.5 377.5,21.0 380.0,33.0 C382.5,45.0 386.2,57.3 387.0,66.0 C387.8,74.7 386.2,78.0 385.0,85.0 C383.8,92.0 381.8,101.3 380.0,108.0 C378.2,114.7 374.5,118.3 374.0,125.0 C373.5,131.7 374.8,140.5 377.0,148.0 C379.2,155.5 384.5,163.0 387.0,170.0 C389.5,177.0 391.8,184.5 392.0,190.0 C392.2,195.5 390.5,199.7 388.0,203.0 C385.5,206.3 380.5,208.3 377.0,210.0 C373.5,211.7 368.2,209.8 367.0,213.0 C365.8,216.2 368.5,223.5 370.0,229.0 C371.5,234.5 375.7,241.2 376.0,246.0 C376.3,250.8 374.0,254.3 372.0,258.0 C370.0,261.7 364.3,264.5 364.0,268.0 C363.7,271.5 369.8,274.3 370.0,279.0 C370.2,283.7 366.0,290.0 365.0,296.0 C364.0,302.0 364.8,308.0 364.0,315.0 C363.2,322.0 362.8,330.8 360.0,338.0 C357.2,345.2 353.5,352.8 347.0,358.0 C340.5,363.2 329.7,366.8 321.0,369.0 C312.3,371.2 304.8,371.7 295.0,371.0 C285.2,370.3 273.0,368.0 262.0,365.0 C251.0,362.0 238.8,356.8 229.0,353.0 C219.2,349.2 210.0,346.2 203.0,342.0 C196.0,337.8 191.2,334.2 187.0,328.0 C182.8,321.8 180.2,314.2 178.0,305.0 C175.8,295.8 174.3,282.8 174.0,273.0 C173.7,263.2 174.0,256.0 176.0,246.0 C178.0,236.0 182.7,223.3 186.0,213.0 C189.3,202.7 192.8,193.8 196.0,184.0 C199.2,174.2 202.7,163.8 205.0,154.0 C207.3,144.2 210.0,138.2 210.0,125.0 C210.0,111.8 207.0,90.3 205.0,75.0 C203.0,59.7 200.5,46.5 198.0,33.0 C195.5,19.5 161.0,0.5 190.0,-6.0Z" fill="url(#gface)" />
</g>
<clipPath id="cface"><path d="M190.0,-6.0 C219.0,-12.5 340.3,-12.5 372.0,-6.0 C403.7,0.5 377.5,21.0 380.0,33.0 C382.5,45.0 386.2,57.3 387.0,66.0 C387.8,74.7 386.2,78.0 385.0,85.0 C383.8,92.0 381.8,101.3 380.0,108.0 C378.2,114.7 374.5,118.3 374.0,125.0 C373.5,131.7 374.8,140.5 377.0,148.0 C379.2,155.5 384.5,163.0 387.0,170.0 C389.5,177.0 391.8,184.5 392.0,190.0 C392.2,195.5 390.5,199.7 388.0,203.0 C385.5,206.3 380.5,208.3 377.0,210.0 C373.5,211.7 368.2,209.8 367.0,213.0 C365.8,216.2 368.5,223.5 370.0,229.0 C371.5,234.5 375.7,241.2 376.0,246.0 C376.3,250.8 374.0,254.3 372.0,258.0 C370.0,261.7 364.3,264.5 364.0,268.0 C363.7,271.5 369.8,274.3 370.0,279.0 C370.2,283.7 366.0,290.0 365.0,296.0 C364.0,302.0 364.8,308.0 364.0,315.0 C363.2,322.0 362.8,330.8 360.0,338.0 C357.2,345.2 353.5,352.8 347.0,358.0 C340.5,363.2 329.7,366.8 321.0,369.0 C312.3,371.2 304.8,371.7 295.0,371.0 C285.2,370.3 273.0,368.0 262.0,365.0 C251.0,362.0 238.8,356.8 229.0,353.0 C219.2,349.2 210.0,346.2 203.0,342.0 C196.0,337.8 191.2,334.2 187.0,328.0 C182.8,321.8 180.2,314.2 178.0,305.0 C175.8,295.8 174.3,282.8 174.0,273.0 C173.7,263.2 174.0,256.0 176.0,246.0 C178.0,236.0 182.7,223.3 186.0,213.0 C189.3,202.7 192.8,193.8 196.0,184.0 C199.2,174.2 202.7,163.8 205.0,154.0 C207.3,144.2 210.0,138.2 210.0,125.0 C210.0,111.8 207.0,90.3 205.0,75.0 C203.0,59.7 200.5,46.5 198.0,33.0 C195.5,19.5 161.0,0.5 190.0,-6.0Z"/></clipPath>
<g clip-path="url(#cface)">
<g filter="url(#b8)">
<path d="M170.0,-10.0 C178.2,-69.2 205.3,-25.0 214.0,-10.0 C222.7,5.0 220.0,56.7 222.0,80.0 C224.0,103.3 227.7,111.7 226.0,130.0 C224.3,148.3 216.7,170.0 212.0,190.0 C207.3,210.0 201.3,226.7 198.0,250.0 C194.7,273.3 197.5,314.2 192.0,330.0 C186.5,345.8 168.7,401.7 165.0,345.0 C161.3,288.3 161.8,49.2 170.0,-10.0Z" fill="#3a1f17" opacity="0.7" />
<path d="M170.0,310.0 C180.8,303.0 208.3,334.7 230.0,343.0 C251.7,351.3 277.5,361.3 300.0,360.0 C322.5,358.7 352.5,330.8 365.0,335.0 C377.5,339.2 408.3,376.7 375.0,385.0 C341.7,393.3 199.2,397.5 165.0,385.0 C130.8,372.5 159.2,317.0 170.0,310.0Z" fill="#3e241b" opacity="0.85" />
<path d="M262.0,-5.0 C276.7,-12.5 333.3,-12.5 350.0,-5.0 C366.7,2.5 365.3,28.8 362.0,40.0 C358.7,51.2 342.8,59.0 330.0,62.0 C317.2,65.0 296.3,61.7 285.0,58.0 C273.7,54.3 265.8,50.5 262.0,40.0 C258.2,29.5 247.3,2.5 262.0,-5.0Z" fill="#dcb29e" opacity="0.75" />
<path d="M248.0,158.0 C258.3,150.2 287.7,143.5 300.0,148.0 C312.3,152.5 321.7,171.7 322.0,185.0 C322.3,198.3 313.0,220.8 302.0,228.0 C291.0,235.2 266.7,233.5 256.0,228.0 C245.3,222.5 239.3,206.7 238.0,195.0 C236.7,183.3 237.7,165.8 248.0,158.0Z" fill="#cea292" opacity="0.8" />
<path d="M300.0,300.0 C306.7,292.5 341.3,294.2 350.0,300.0 C358.7,305.8 358.7,327.5 352.0,335.0 C345.3,342.5 318.7,350.8 310.0,345.0 C301.3,339.2 293.3,307.5 300.0,300.0Z" fill="#a87a6a" opacity="0.6" />
</g>
<g filter="url(#b5)">
<path d="M224.0,100.0 C229.3,93.0 246.3,92.7 260.0,92.0 C273.7,91.3 295.0,93.0 306.0,96.0 C317.0,99.0 327.0,104.3 326.0,110.0 C325.0,115.7 311.8,125.3 300.0,130.0 C288.2,134.7 267.0,137.3 255.0,138.0 C243.0,138.7 233.2,140.3 228.0,134.0 C222.8,127.7 218.7,107.0 224.0,100.0Z" fill="#6e4632" opacity="0.6" />
<path d="M354.0,88.0 C359.7,79.7 383.7,64.7 390.0,70.0 C396.3,75.3 394.7,109.3 392.0,120.0 C389.3,130.7 380.0,134.0 374.0,134.0 C368.0,134.0 359.3,127.7 356.0,120.0 C352.7,112.3 348.3,96.3 354.0,88.0Z" fill="#4a2a1e" opacity="0.75" />
<path d="M328.0,130.0 C333.0,122.0 345.3,115.3 350.0,122.0 C354.7,128.7 356.7,156.7 356.0,170.0 C355.3,183.3 351.3,195.7 346.0,202.0 C340.7,208.3 328.3,213.3 324.0,208.0 C319.7,202.7 319.3,183.0 320.0,170.0 C320.7,157.0 323.0,138.0 328.0,130.0Z" fill="#9a6a58" opacity="0.5" />
<path d="M366.0,146.0 C369.0,142.2 378.0,155.7 382.0,163.0 C386.0,170.3 390.3,183.5 390.0,190.0 C389.7,196.5 384.3,202.7 380.0,202.0 C375.7,201.3 366.3,195.3 364.0,186.0 C361.7,176.7 363.0,149.8 366.0,146.0Z" fill="#d6a696" opacity="0.8" />
<path d="M326.0,208.0 C334.7,204.0 360.3,208.3 368.0,213.0 C375.7,217.7 376.7,230.3 372.0,236.0 C367.3,241.7 349.3,246.8 340.0,247.0 C330.7,247.2 318.3,243.5 316.0,237.0 C313.7,230.5 317.3,212.0 326.0,208.0Z" fill="#86574a" opacity="0.6" />
<path d="M318.0,300.0 C324.0,297.3 355.3,296.0 362.0,298.0 C368.7,300.0 364.0,309.3 358.0,312.0 C352.0,314.7 332.7,316.0 326.0,314.0 C319.3,312.0 312.0,302.7 318.0,300.0Z" fill="#7a4c40" opacity="0.6" />
</g>
</g>
<g filter="url(#b5)">
<path d="M105.0,-8.0 C124.2,-19.3 183.0,-21.8 200.0,-8.0 C217.0,5.8 205.0,52.8 207.0,75.0 C209.0,97.2 213.5,105.8 212.0,125.0 C210.5,144.2 203.3,168.3 198.0,190.0 C192.7,211.7 183.7,236.7 180.0,255.0 C176.3,273.3 175.7,286.7 176.0,300.0 C176.3,313.3 186.3,326.7 182.0,335.0 C177.7,343.3 165.3,342.5 150.0,350.0 C134.7,357.5 116.3,371.7 90.0,380.0 C63.7,388.3 8.3,421.7 -8.0,400.0 C-24.3,378.3 -16.8,291.7 -8.0,250.0 C0.8,208.3 29.5,181.7 45.0,150.0 C60.5,118.3 75.0,86.3 85.0,60.0 C95.0,33.7 85.8,3.3 105.0,-8.0Z" fill="#080302" />
<path d="M132.0,-8.0 C140.7,-22.7 173.3,-22.7 182.0,-8.0 C190.7,6.7 185.0,52.0 184.0,80.0 C183.0,108.0 181.3,131.7 176.0,160.0 C170.7,188.3 161.0,221.7 152.0,250.0 C143.0,278.3 134.3,314.2 122.0,330.0 C109.7,345.8 80.3,358.3 78.0,345.0 C75.7,331.7 99.7,280.8 108.0,250.0 C116.3,219.2 124.3,188.3 128.0,160.0 C131.7,131.7 129.3,108.0 130.0,80.0 C130.7,52.0 123.3,6.7 132.0,-8.0Z" fill="url(#ghb)" opacity="0.9" />
<path d="M145.0,-8.0 C150.0,-22.7 167.5,-24.3 172.0,-8.0 C176.5,8.3 174.0,60.3 172.0,90.0 C170.0,119.7 165.3,160.0 160.0,170.0 C154.7,180.0 143.0,165.0 140.0,150.0 C137.0,135.0 141.2,106.3 142.0,80.0 C142.8,53.7 140.0,6.7 145.0,-8.0Z" fill="#2a160f" opacity="0.35" />
<path d="M190.0,-8.0 C192.8,-19.3 208.5,-21.8 213.0,-8.0 C217.5,5.8 215.5,52.8 217.0,75.0 C218.5,97.2 223.5,107.8 222.0,125.0 C220.5,142.2 212.7,170.2 208.0,178.0 C203.3,185.8 195.3,181.7 194.0,172.0 C192.7,162.3 199.7,138.7 200.0,120.0 C200.3,101.3 197.7,81.3 196.0,60.0 C194.3,38.7 187.2,3.3 190.0,-8.0Z" fill="url(#ghf)" opacity="0.95" />
<path d="M384.0,-8.0 C399.7,-14.8 462.3,-24.7 478.0,-8.0 C493.7,8.7 482.3,73.3 478.0,92.0 C473.7,110.7 460.3,102.7 452.0,104.0 C443.7,105.3 435.7,99.0 428.0,100.0 C420.3,101.0 411.7,111.3 406.0,110.0 C400.3,108.7 396.8,99.3 394.0,92.0 C391.2,84.7 390.7,75.8 389.0,66.0 C387.3,56.2 384.8,45.3 384.0,33.0 C383.2,20.7 368.3,-1.2 384.0,-8.0Z" fill="#2e1912" />
<path d="M415.0,-8.0 C424.7,-14.3 467.5,-22.7 478.0,-8.0 C488.5,6.7 482.7,63.3 478.0,80.0 C473.3,96.7 458.0,93.7 450.0,92.0 C442.0,90.3 435.0,80.3 430.0,70.0 C425.0,59.7 422.5,43.0 420.0,30.0 C417.5,17.0 405.3,-1.7 415.0,-8.0Z" fill="#553628" opacity="0.7" />
<path d="M374.0,-8.0 C376.8,-14.8 391.3,-19.3 396.0,-8.0 C400.7,3.3 401.3,42.0 402.0,60.0 C402.7,78.0 402.3,90.0 400.0,100.0 C397.7,110.0 390.5,125.0 388.0,120.0 C385.5,115.0 386.5,84.5 385.0,70.0 C383.5,55.5 380.8,46.0 379.0,33.0 C377.2,20.0 371.2,-1.2 374.0,-8.0Z" fill="#0a0302" />
<path d="M392.0,205.0 C399.5,203.3 415.0,200.5 425.0,205.0 C435.0,209.5 443.2,222.5 452.0,232.0 C460.8,241.5 473.7,226.5 478.0,262.0 C482.3,297.5 486.8,417.0 478.0,445.0 C469.2,473.0 440.5,440.0 425.0,430.0 C409.5,420.0 393.8,403.3 385.0,385.0 C376.2,366.7 374.2,340.8 372.0,320.0 C369.8,299.2 370.7,277.5 372.0,260.0 C373.3,242.5 376.7,224.2 380.0,215.0 C383.3,205.8 384.5,206.7 392.0,205.0Z" fill="#1f0f0a" />
<path d="M420.0,240.0 C429.7,232.5 468.3,248.3 478.0,275.0 C487.7,301.7 484.3,382.5 478.0,400.0 C471.7,417.5 449.7,393.3 440.0,380.0 C430.3,366.7 423.3,343.3 420.0,320.0 C416.7,296.7 410.3,247.5 420.0,240.0Z" fill="#301a12" opacity="0.6" />
<path d="M372.0,330.0 C377.8,326.7 388.7,361.7 400.0,380.0 C411.3,398.3 443.3,428.3 440.0,440.0 C436.7,451.7 392.5,456.7 380.0,450.0 C367.5,443.3 366.3,420.0 365.0,400.0 C363.7,380.0 366.2,333.3 372.0,330.0Z" fill="#0c0403" opacity="0.8" />
<path d="M240.0,372.0 C249.2,369.5 283.3,380.0 300.0,380.0 C316.7,380.0 328.0,377.0 340.0,372.0 C352.0,367.0 364.5,345.3 372.0,350.0 C379.5,354.7 385.0,380.0 385.0,400.0 C385.0,420.0 380.3,458.7 372.0,470.0 C363.7,481.3 346.2,474.7 335.0,468.0 C323.8,461.3 316.7,439.7 305.0,430.0 C293.3,420.3 275.0,415.8 265.0,410.0 C255.0,404.2 249.2,401.3 245.0,395.0 C240.8,388.7 230.8,374.5 240.0,372.0Z" fill="#1c0d08" />
<path d="M-8.0,412.0 C1.8,410.0 32.5,423.7 51.0,440.0 C69.5,456.3 85.8,486.7 103.0,510.0 C120.2,533.3 136.8,556.7 154.0,580.0 C171.2,603.3 190.8,628.0 206.0,650.0 C221.2,672.0 259.3,701.7 245.0,712.0 C230.7,722.3 143.7,722.2 120.0,712.0 C96.3,701.8 108.2,671.5 103.0,651.0 C97.8,630.5 94.7,606.2 89.0,589.0 C83.3,571.8 78.2,563.3 69.0,548.0 C59.8,532.7 46.8,513.0 34.0,497.0 C21.2,481.0 -1.0,466.2 -8.0,452.0 C-15.0,437.8 -17.8,414.0 -8.0,412.0Z" fill="#1a0c08" />
<path d="M-8.0,428.0 C0.0,429.2 24.5,445.0 40.0,462.0 C55.5,479.0 70.8,505.3 85.0,530.0 C99.2,554.7 112.5,579.7 125.0,610.0 C137.5,640.3 160.8,695.0 160.0,712.0 C159.2,729.0 129.5,722.2 120.0,712.0 C110.5,701.8 108.2,671.5 103.0,651.0 C97.8,630.5 94.7,606.2 89.0,589.0 C83.3,571.8 78.2,563.3 69.0,548.0 C59.8,532.7 46.8,512.5 34.0,497.0 C21.2,481.5 -1.0,466.5 -8.0,455.0 C-15.0,443.5 -16.0,426.8 -8.0,428.0Z" fill="#3a2016" opacity="0.85" />
</g>
<g filter="url(#b2)">
<path d="M-10.0,448.0 C-4.7,409.7 12.7,472.7 22.0,484.0 C31.3,495.3 38.0,504.0 46.0,516.0 C54.0,528.0 63.0,543.0 70.0,556.0 C77.0,569.0 83.0,582.0 88.0,594.0 C93.0,606.0 96.3,617.0 100.0,628.0 C103.7,639.0 105.7,645.7 110.0,660.0 C114.3,674.3 146.0,705.0 126.0,714.0 C106.0,723.0 12.7,758.3 -10.0,714.0 C-32.7,669.7 -15.3,486.3 -10.0,448.0Z" fill="url(#gshl)" />
</g>
<clipPath id="csh"><path d="M-10.0,448.0 C-4.7,409.7 12.7,472.7 22.0,484.0 C31.3,495.3 38.0,504.0 46.0,516.0 C54.0,528.0 63.0,543.0 70.0,556.0 C77.0,569.0 83.0,582.0 88.0,594.0 C93.0,606.0 96.3,617.0 100.0,628.0 C103.7,639.0 105.7,645.7 110.0,660.0 C114.3,674.3 146.0,705.0 126.0,714.0 C106.0,723.0 12.7,758.3 -10.0,714.0 C-32.7,669.7 -15.3,486.3 -10.0,448.0Z"/></clipPath>
<g clip-path="url(#csh)"><g filter="url(#b5)">
<path d="M-8.0,448.0 C-1.0,450.3 21.2,474.7 34.0,490.0 C46.8,505.3 59.8,524.2 69.0,540.0 C78.2,555.8 83.3,567.5 89.0,585.0 C94.7,602.5 97.2,623.8 103.0,645.0 C108.8,666.2 123.8,700.8 124.0,712.0 C124.2,723.2 110.0,722.3 104.0,712.0 C98.0,701.7 93.0,669.3 88.0,650.0 C83.0,630.7 79.7,612.3 74.0,596.0 C68.3,579.7 62.7,567.0 54.0,552.0 C45.3,537.0 32.3,518.7 22.0,506.0 C11.7,493.3 -3.0,485.7 -8.0,476.0 C-13.0,466.3 -15.0,445.7 -8.0,448.0Z" fill="#5e3a2c" opacity="0.55" />
</g></g>
<g filter="url(#b8)">
<path d="M350.0,480.0 C353.0,470.8 365.3,496.7 372.0,505.0 C378.7,513.3 386.7,515.8 390.0,530.0 C393.3,544.2 389.7,572.3 392.0,590.0 C394.3,607.7 406.0,626.3 404.0,636.0 C402.0,645.7 387.7,647.3 380.0,648.0 C372.3,648.7 362.3,654.7 358.0,640.0 C353.7,625.3 355.3,586.7 354.0,560.0 C352.7,533.3 347.0,489.2 350.0,480.0Z" fill="#120705" opacity="0.95" />
</g>
<g filter="url(#b3)">
<path d="M396.0,672.0 C401.3,661.7 411.0,655.0 420.0,650.0 C429.0,645.0 440.3,643.7 450.0,642.0 C459.7,640.3 473.3,628.3 478.0,640.0 C482.7,651.7 493.0,700.0 478.0,712.0 C463.0,724.0 401.7,718.7 388.0,712.0 C374.3,705.3 390.7,682.3 396.0,672.0Z" fill="#25130d" />
</g>
<g filter="url(#b5)">
<path d="M125.0,388.0 C129.5,380.3 142.5,365.3 147.0,374.0 C151.5,382.7 147.8,420.7 152.0,440.0 C156.2,459.3 162.0,473.3 172.0,490.0 C182.0,506.7 208.7,529.0 212.0,540.0 C215.3,551.0 203.3,560.7 192.0,556.0 C180.7,551.3 155.3,527.2 144.0,512.0 C132.7,496.8 128.0,480.3 124.0,465.0 C120.0,449.7 119.8,432.8 120.0,420.0 C120.2,407.2 120.5,395.7 125.0,388.0Z" fill="#34190f" />
</g>
<g filter="url(#b2)">
<path d="M160.0,470.0 C167.5,461.3 198.3,468.3 215.0,470.0 C231.7,471.7 241.2,479.5 260.0,480.0 C278.8,480.5 313.5,468.2 328.0,473.0 C342.5,477.8 342.2,495.3 347.0,509.0 C351.8,522.7 355.8,539.7 357.0,555.0 C358.2,570.3 354.2,584.7 354.0,601.0 C353.8,617.3 355.8,634.5 356.0,653.0 C356.2,671.5 373.5,702.2 355.0,712.0 C336.5,721.8 262.2,721.8 245.0,712.0 C227.8,702.2 249.7,669.3 252.0,653.0 C254.3,636.7 260.5,624.8 259.0,614.0 C257.5,603.2 251.2,597.8 243.0,588.0 C234.8,578.2 222.2,566.0 210.0,555.0 C197.8,544.0 178.3,536.2 170.0,522.0 C161.7,507.8 152.5,478.7 160.0,470.0Z" fill="url(#ghand)" />
<path d="M183.0,352.0 C185.5,342.0 199.8,347.8 203.0,360.0 C206.2,372.2 204.5,415.0 202.0,425.0 C199.5,435.0 191.2,432.2 188.0,420.0 C184.8,407.8 180.5,362.0 183.0,352.0Z" fill="#6a4238" />
<path d="M155.0,340.0 C158.7,334.5 162.2,335.0 166.0,335.0 C169.8,335.0 175.0,334.0 178.0,340.0 C181.0,346.0 182.7,360.0 184.0,371.0 C185.3,382.0 183.7,395.2 186.0,406.0 C188.3,416.8 192.0,423.3 198.0,436.0 C204.0,448.7 221.7,471.3 222.0,482.0 C222.3,492.7 207.2,498.5 200.0,500.0 C192.8,501.5 185.7,498.0 179.0,491.0 C172.3,484.0 165.3,469.0 160.0,458.0 C154.7,447.0 149.7,440.0 147.0,425.0 C144.3,410.0 142.7,382.2 144.0,368.0 C145.3,353.8 151.3,345.5 155.0,340.0Z" fill="url(#gf1)" />
<path d="M205.0,356.0 C207.7,351.0 211.5,350.2 215.0,350.0 C218.5,349.8 223.0,351.5 226.0,355.0 C229.0,358.5 231.3,361.0 233.0,371.0 C234.7,381.0 233.2,401.3 236.0,415.0 C238.8,428.7 243.5,440.8 250.0,453.0 C256.5,465.2 274.7,479.3 275.0,488.0 C275.3,496.7 259.8,504.5 252.0,505.0 C244.2,505.5 235.2,498.2 228.0,491.0 C220.8,483.8 213.7,471.2 209.0,462.0 C204.3,452.8 201.7,449.7 200.0,436.0 C198.3,422.3 198.2,393.3 199.0,380.0 C199.8,366.7 202.3,361.0 205.0,356.0Z" fill="url(#gf1)" />
<path d="M256.0,382.0 C257.7,378.5 261.3,377.0 264.0,377.0 C266.7,377.0 269.3,378.7 272.0,382.0 C274.7,385.3 277.2,391.2 280.0,397.0 C282.8,402.8 285.5,408.7 289.0,417.0 C292.5,425.3 295.5,437.7 301.0,447.0 C306.5,456.3 315.8,465.0 322.0,473.0 C328.2,481.0 341.7,489.7 338.0,495.0 C334.3,500.3 309.0,505.7 300.0,505.0 C291.0,504.3 289.2,498.2 284.0,491.0 C278.8,483.8 273.3,471.2 269.0,462.0 C264.7,452.8 260.5,446.7 258.0,436.0 C255.5,425.3 254.3,407.0 254.0,398.0 C253.7,389.0 254.3,385.5 256.0,382.0Z" fill="url(#gf1)" />
</g>
<g filter="url(#b3)">
<path d="M186.0,410.0 C186.7,406.7 193.3,426.3 200.0,440.0 C206.7,453.7 223.7,483.0 226.0,492.0 C228.3,501.0 219.0,499.3 214.0,494.0 C209.0,488.7 200.7,474.0 196.0,460.0 C191.3,446.0 185.3,413.3 186.0,410.0Z" fill="#2a140f" opacity="0.8" />
<path d="M238.0,420.0 C239.0,416.7 248.7,428.0 256.0,440.0 C263.3,452.0 279.7,483.0 282.0,492.0 C284.3,501.0 275.3,499.3 270.0,494.0 C264.7,488.7 255.3,472.3 250.0,460.0 C244.7,447.7 237.0,423.3 238.0,420.0Z" fill="#2a140f" opacity="0.8" />
<path d="M245.0,600.0 C255.0,579.7 290.8,571.3 300.0,590.0 C309.2,608.7 310.0,691.7 300.0,712.0 C290.0,732.3 249.2,730.7 240.0,712.0 C230.8,693.3 235.0,620.3 245.0,600.0Z" fill="#2a1510" opacity="0.5" />
</g>
<g filter="url(#b8)">
<path d="M205.0,545.0 C209.2,537.5 229.5,564.2 240.0,575.0 C250.5,585.8 263.7,587.2 268.0,610.0 C272.3,632.8 274.8,695.0 266.0,712.0 C257.2,729.0 223.5,727.3 215.0,712.0 C206.5,696.7 216.7,647.8 215.0,620.0 C213.3,592.2 200.8,552.5 205.0,545.0Z" fill="#050202" opacity="0.9" />
<path d="M300.0,610.0 C310.0,591.3 341.3,583.0 350.0,600.0 C358.7,617.0 362.0,693.3 352.0,712.0 C342.0,730.7 298.7,729.0 290.0,712.0 C281.3,695.0 290.0,628.7 300.0,610.0Z" fill="#7a5040" opacity="0.35" />
</g>
<g filter="url(#b1)">
<path d="M156.0,341.0 C157.3,338.3 161.8,336.2 165.0,336.0 C168.2,335.8 173.3,337.7 175.0,340.0 C176.7,342.3 176.5,347.5 175.0,350.0 C173.5,352.5 169.0,354.7 166.0,355.0 C163.0,355.3 158.7,354.3 157.0,352.0 C155.3,349.7 154.7,343.7 156.0,341.0Z" fill="#c6a49e" />
<path d="M206.0,356.0 C207.3,353.2 212.0,351.2 215.0,351.0 C218.0,350.8 222.5,352.5 224.0,355.0 C225.5,357.5 225.5,363.3 224.0,366.0 C222.5,368.7 217.8,370.7 215.0,371.0 C212.2,371.3 208.5,370.5 207.0,368.0 C205.5,365.5 204.7,358.8 206.0,356.0Z" fill="#c6a49e" />
<path d="M257.0,382.0 C258.0,379.5 261.7,378.0 264.0,378.0 C266.3,378.0 269.8,379.8 271.0,382.0 C272.2,384.2 272.2,388.8 271.0,391.0 C269.8,393.2 266.2,394.7 264.0,395.0 C261.8,395.3 259.2,395.2 258.0,393.0 C256.8,390.8 256.0,384.5 257.0,382.0Z" fill="#bc9a94" />
</g>
<g filter="url(#b1)">
<path d="M212,80 C230,69 258,65 288,67 C306,69 320,74 329,84 C322,86 312,84 300,82 C280,79 250,78 228,82 C222,83 216,83 212,80Z" fill="#3c261e"/>
<path d="M360,84 C368,76 378,70 387,64 L389,73 C381,78 372,84 364,90Z" fill="#30190f"/>
<path d="M226,127 C245,120 262,114 280,112 C288,112 294,114 298,116 C288,120 276,126 262,128 C250,130 238,130 226,127Z" fill="#2a140c"/>
<path d="M226,121 C245,110 268,104 282,105 C290,106 295,110 298,114" fill="none" stroke="#5a3424" stroke-width="1.600" opacity=".8"/>
<ellipse cx="271" cy="119" rx="7" ry="4.5" fill="#3c2010"/>
<ellipse cx="258" cy="123" rx="5" ry="2.2" fill="#94807a"/>
<path d="M358,112 C366,108 374,106 382,108 C378,114 370,119 362,120Z" fill="#2a140c"/>
<ellipse cx="362" cy="113" rx="2.5" ry="2" fill="#a8968c"/>
<ellipse cx="353" cy="208" rx="11" ry="3.5" fill="#5a2c22" transform="rotate(-8 353 208)"/>
<path d="M298,270 C312,262 332,252 352,246 C362,243 372,243 377,247 C376,254 372,259 366,263 C350,262 330,266 314,272Z" fill="#b4746c"/>
<path d="M302,274 C320,278 345,276 366,266 C371,272 371,282 366,292 C356,300 336,302 320,296 C312,290 306,282 302,274Z" fill="#c08078"/>
<path d="M314,272 C330,266 350,262 366,263 C362,270 350,275 334,277 C326,277 318,275 314,272Z" fill="#3a1410"/>
<path d="M332,268 C342,264 354,263 362,264 C358,269 348,271 338,271Z" fill="#cfc6c2"/>
</g>
<clipPath id="chl"><path d="M100.0,-8.0 C118.8,-19.3 180.5,-21.8 198.0,-8.0 C215.5,5.8 203.0,52.8 205.0,75.0 C207.0,97.2 211.5,105.8 210.0,125.0 C208.5,144.2 201.3,168.3 196.0,190.0 C190.7,211.7 181.7,236.7 178.0,255.0 C174.3,273.3 174.0,286.7 174.0,300.0 C174.0,313.3 182.0,326.7 178.0,335.0 C174.0,343.3 164.7,341.7 150.0,350.0 C135.3,358.3 116.3,375.8 90.0,385.0 C63.7,394.2 8.3,425.8 -8.0,405.0 C-24.3,384.2 -16.8,302.5 -8.0,260.0 C0.8,217.5 29.5,183.3 45.0,150.0 C60.5,116.7 75.8,86.3 85.0,60.0 C94.2,33.7 81.2,3.3 100.0,-8.0Z"/></clipPath>
<g clip-path="url(#chl)" opacity=".42" mask="url(#mtm)"><g transform="rotate(9 150 0)"><rect x="-200" y="-100" width="600" height="620" filter="url(#htx)"/></g></g>
<clipPath id="chr"><path d="M386.0,-8.0 C401.3,-14.8 462.7,-24.7 478.0,-8.0 C493.3,8.7 482.3,73.3 478.0,92.0 C473.7,110.7 460.3,102.7 452.0,104.0 C443.7,105.3 435.7,99.0 428.0,100.0 C420.3,101.0 411.3,111.3 406.0,110.0 C400.7,108.7 398.5,99.3 396.0,92.0 C393.5,84.7 392.7,75.8 391.0,66.0 C389.3,56.2 386.8,45.3 386.0,33.0 C385.2,20.7 370.7,-1.2 386.0,-8.0Z"/></clipPath>
<g clip-path="url(#chr)" opacity=".9"><g transform="rotate(-14 430 0)"><rect x="300" y="-60" width="260" height="240" filter="url(#htx)"/></g></g>
<clipPath id="chr2"><path d="M392.0,208.0 C399.2,206.3 415.0,203.7 425.0,208.0 C435.0,212.3 443.2,224.7 452.0,234.0 C460.8,243.3 473.7,228.8 478.0,264.0 C482.3,299.2 486.8,417.3 478.0,445.0 C469.2,472.7 440.5,440.0 425.0,430.0 C409.5,420.0 393.5,403.3 385.0,385.0 C376.5,366.7 375.8,340.8 374.0,320.0 C372.2,299.2 372.7,277.0 374.0,260.0 C375.3,243.0 379.0,226.7 382.0,218.0 C385.0,209.3 384.8,209.7 392.0,208.0Z"/></clipPath>
<g clip-path="url(#chr2)" opacity=".4"><g transform="rotate(-4 430 300)"><rect x="300" y="150" width="260" height="340" filter="url(#htx)"/></g></g>
<clipPath id="chb"><path d="M-8.0,420.0 C1.8,418.5 32.5,430.3 51.0,446.0 C69.5,461.7 85.8,491.0 103.0,514.0 C120.2,537.0 136.8,560.7 154.0,584.0 C171.2,607.3 191.7,632.7 206.0,654.0 C220.3,675.3 254.0,702.3 240.0,712.0 C226.0,721.7 144.7,722.2 122.0,712.0 C99.3,701.8 109.3,671.5 104.0,651.0 C98.7,630.5 95.7,606.2 90.0,589.0 C84.3,571.8 79.2,563.3 70.0,548.0 C60.8,532.7 48.0,512.5 35.0,497.0 C22.0,481.5 -0.8,467.8 -8.0,455.0 C-15.2,442.2 -17.8,421.5 -8.0,420.0Z"/></clipPath>
<g clip-path="url(#chb)" opacity=".5"><g transform="rotate(-30 60 500)"><rect x="-200" y="300" width="560" height="560" filter="url(#htx)"/></g></g>
<g filter="url(#b1)" opacity=".12">
<path d="M147.8,-5.0 C148.4,10.8 153.8,55.8 151.6,90.0 C149.4,124.2 139.9,160.0 134.5,200.0 C129.2,240.0 128.0,293.3 119.4,330.0 C110.8,366.7 89.2,405.0 83.2,420.0" fill="none" stroke="#5a3424" stroke-width="1.2" stroke-linecap="round"/>
<path d="M123.3,-5.0 C122.7,10.8 122.1,55.8 119.8,90.0 C117.5,124.2 116.5,160.0 109.4,200.0 C102.4,240.0 90.5,293.3 77.5,330.0 C64.4,366.7 39.0,405.0 31.3,420.0" fill="none" stroke="#5a3424" stroke-width="1.1" stroke-linecap="round"/>
<path d="M168.7,-5.0 C169.2,10.8 171.7,55.8 171.5,90.0 C171.2,124.2 171.7,160.0 167.2,200.0 C162.8,240.0 154.1,293.3 144.8,330.0 C135.5,366.7 116.8,405.0 111.1,420.0" fill="none" stroke="#5a3424" stroke-width="1.5" stroke-linecap="round"/>
<path d="M154.5,-5.0 C153.9,10.8 153.6,55.8 151.1,90.0 C148.5,124.2 150.0,160.0 139.1,200.0 C128.2,240.0 104.5,293.3 85.7,330.0 C66.9,366.7 36.2,405.0 26.3,420.0" fill="none" stroke="#6a4230" stroke-width="1.3" stroke-linecap="round"/>
<path d="M167.7,-5.0 C168.2,10.8 172.4,55.8 170.5,90.0 C168.5,124.2 164.6,160.0 155.9,200.0 C147.3,240.0 133.0,293.3 118.8,330.0 C104.6,366.7 78.8,405.0 70.8,420.0" fill="none" stroke="#5a3424" stroke-width="1.5" stroke-linecap="round"/>
<path d="M176.8,-5.0 C177.2,10.8 182.1,55.8 179.4,90.0 C176.6,124.2 167.3,160.0 160.3,200.0 C153.3,240.0 148.4,293.3 137.5,330.0 C126.7,366.7 102.2,405.0 95.1,420.0" fill="none" stroke="#5a3424" stroke-width="1.5" stroke-linecap="round"/>
<path d="M163.7,-5.0 C164.6,10.8 171.3,55.8 169.0,90.0 C166.7,124.2 158.5,160.0 149.8,200.0 C141.1,240.0 130.0,293.3 116.6,330.0 C103.3,366.7 77.5,405.0 69.7,420.0" fill="none" stroke="#3a2016" stroke-width="1.2" stroke-linecap="round"/>
<path d="M140.9,-5.0 C141.7,10.8 148.5,55.8 146.2,90.0 C144.0,124.2 133.2,160.0 127.3,200.0 C121.5,240.0 119.9,293.3 111.0,330.0 C102.2,366.7 80.2,405.0 74.0,420.0" fill="none" stroke="#6a4230" stroke-width="1.4" stroke-linecap="round"/>
<path d="M198.5,-5.0 C198.4,10.8 199.7,55.8 198.0,90.0 C196.2,124.2 197.4,160.0 188.1,200.0 C178.7,240.0 158.2,293.3 141.8,330.0 C125.3,366.7 98.1,405.0 89.3,420.0" fill="none" stroke="#5a3424" stroke-width="1.4" stroke-linecap="round"/>
<path d="M133.2,-5.0 C134.4,10.8 142.3,55.8 140.4,90.0 C138.4,124.2 128.9,160.0 121.4,200.0 C114.0,240.0 106.7,293.3 95.4,330.0 C84.1,366.7 60.8,405.0 53.8,420.0" fill="none" stroke="#5a3424" stroke-width="1.7" stroke-linecap="round"/>
<path d="M170.7,-5.0 C170.7,10.8 173.1,55.8 170.5,90.0 C167.8,124.2 165.4,160.0 154.8,200.0 C144.2,240.0 124.2,293.3 106.8,330.0 C89.4,366.7 59.7,405.0 50.3,420.0" fill="none" stroke="#3a2016" stroke-width="1.5" stroke-linecap="round"/>
<path d="M160.0,-5.0 C161.2,10.8 170.3,55.8 167.3,90.0 C164.3,124.2 153.5,160.0 141.9,200.0 C130.3,240.0 114.4,293.3 97.8,330.0 C81.2,366.7 51.5,405.0 42.3,420.0" fill="none" stroke="#5a3424" stroke-width="0.9" stroke-linecap="round"/>
<path d="M182.5,-5.0 C183.9,10.8 192.3,55.8 190.5,90.0 C188.6,124.2 181.4,160.0 171.3,200.0 C161.2,240.0 145.1,293.3 129.8,330.0 C114.6,366.7 88.1,405.0 79.7,420.0" fill="none" stroke="#6a4230" stroke-width="1.7" stroke-linecap="round"/>
<path d="M199.6,-5.0 C200.8,10.8 209.0,55.8 206.9,90.0 C204.8,124.2 194.6,160.0 187.0,200.0 C179.5,240.0 172.8,293.3 161.6,330.0 C150.4,366.7 126.8,405.0 119.9,420.0" fill="none" stroke="#5a3424" stroke-width="1.4" stroke-linecap="round"/>
<path d="M138.1,-5.0 C138.9,10.8 144.8,55.8 142.9,90.0 C141.1,124.2 133.5,160.0 126.8,200.0 C120.2,240.0 113.6,293.3 103.0,330.0 C92.3,366.7 69.6,405.0 62.9,420.0" fill="none" stroke="#3a2016" stroke-width="0.9" stroke-linecap="round"/>
<path d="M159.3,-5.0 C160.4,10.8 167.6,55.8 165.9,90.0 C164.3,124.2 158.6,160.0 149.5,200.0 C140.4,240.0 125.6,293.3 111.4,330.0 C97.2,366.7 71.9,405.0 64.0,420.0" fill="none" stroke="#6a4230" stroke-width="1.6" stroke-linecap="round"/>
<path d="M208.8,-5.0 C208.8,10.8 212.5,55.8 209.3,90.0 C206.2,124.2 199.1,160.0 190.0,200.0 C180.8,240.0 168.8,293.3 154.3,330.0 C139.8,366.7 111.7,405.0 103.2,420.0" fill="none" stroke="#5a3424" stroke-width="1.0" stroke-linecap="round"/>
<path d="M139.3,-5.0 C139.6,10.8 142.5,55.8 141.2,90.0 C139.8,124.2 136.9,160.0 131.1,200.0 C125.4,240.0 117.4,293.3 106.9,330.0 C96.4,366.7 74.8,405.0 68.4,420.0" fill="none" stroke="#6a4230" stroke-width="1.1" stroke-linecap="round"/>
<path d="M131.4,-5.0 C132.0,10.8 137.3,55.8 134.7,90.0 C132.1,124.2 124.2,160.0 115.7,200.0 C107.3,240.0 97.3,293.3 84.2,330.0 C71.1,366.7 45.1,405.0 37.2,420.0" fill="none" stroke="#4a2a1c" stroke-width="1.6" stroke-linecap="round"/>
<path d="M165.4,-5.0 C166.1,10.8 172.9,55.8 169.5,90.0 C166.2,124.2 154.7,160.0 145.4,200.0 C136.2,240.0 127.6,293.3 114.2,330.0 C100.7,366.7 73.1,405.0 64.9,420.0" fill="none" stroke="#3a2016" stroke-width="1.3" stroke-linecap="round"/>
<path d="M154.3,-5.0 C154.4,10.8 157.8,55.8 155.1,90.0 C152.3,124.2 145.4,160.0 137.8,200.0 C130.2,240.0 121.9,293.3 109.7,330.0 C97.4,366.7 71.8,405.0 64.2,420.0" fill="none" stroke="#4a2a1c" stroke-width="1.3" stroke-linecap="round"/>
<path d="M128.1,-5.0 C127.7,10.8 127.6,55.8 125.3,90.0 C123.1,124.2 122.4,160.0 114.5,200.0 C106.6,240.0 92.0,293.3 77.7,330.0 C63.4,366.7 37.0,405.0 28.9,420.0" fill="none" stroke="#5a3424" stroke-width="1.9" stroke-linecap="round"/>
<path d="M446.0,-5.0 C445.5,2.5 442.3,21.7 443.0,40.0 C443.8,58.3 449.3,94.2 450.6,105.0" fill="none" stroke="#4a2a1c" stroke-width="1.0" stroke-linecap="round"/>
<path d="M418.9,-5.0 C419.1,2.5 418.4,21.7 419.8,40.0 C421.1,58.3 425.7,94.2 426.9,105.0" fill="none" stroke="#7a5038" stroke-width="1.0" stroke-linecap="round"/>
<path d="M436.6,-5.0 C438.2,2.5 444.5,21.7 446.3,40.0 C448.1,58.3 447.0,94.2 447.2,105.0" fill="none" stroke="#8a6048" stroke-width="0.9" stroke-linecap="round"/>
<path d="M407.7,-5.0 C407.8,2.5 407.5,21.7 408.5,40.0 C409.4,58.3 412.7,94.2 413.5,105.0" fill="none" stroke="#5a3424" stroke-width="1.5" stroke-linecap="round"/>
<path d="M415.4,-5.0 C416.9,2.5 423.4,21.7 424.7,40.0 C426.0,58.3 423.6,94.2 423.3,105.0" fill="none" stroke="#7a5038" stroke-width="1.9" stroke-linecap="round"/>
<path d="M422.4,-5.0 C423.2,2.5 427.0,21.7 427.4,40.0 C427.7,58.3 424.9,94.2 424.4,105.0" fill="none" stroke="#8a6048" stroke-width="1.5" stroke-linecap="round"/>
<path d="M468.1,-5.0 C468.3,2.5 468.3,21.7 469.1,40.0 C469.9,58.3 472.4,94.2 473.0,105.0" fill="none" stroke="#8a6048" stroke-width="1.7" stroke-linecap="round"/>
<path d="M446.0,-5.0 C447.2,2.5 450.2,21.7 453.0,40.0 C455.8,58.3 461.1,94.2 462.7,105.0" fill="none" stroke="#5a3424" stroke-width="1.9" stroke-linecap="round"/>
<path d="M461.4,-5.0 C462.4,2.5 466.9,21.7 467.7,40.0 C468.6,58.3 466.6,94.2 466.4,105.0" fill="none" stroke="#4a2a1c" stroke-width="1.3" stroke-linecap="round"/>
<path d="M402.2,-5.0 C401.6,2.5 397.5,21.7 398.6,40.0 C399.6,58.3 406.7,94.2 408.3,105.0" fill="none" stroke="#8a6048" stroke-width="1.1" stroke-linecap="round"/>
<path d="M445.4,-5.0 C445.5,2.5 443.2,21.7 446.2,40.0 C449.2,58.3 460.3,94.2 463.2,105.0" fill="none" stroke="#8a6048" stroke-width="2.1" stroke-linecap="round"/>
<path d="M427.3,-5.0 C427.2,2.5 425.6,21.7 426.4,40.0 C427.3,58.3 431.4,94.2 432.3,105.0" fill="none" stroke="#5a3424" stroke-width="1.3" stroke-linecap="round"/>
<path d="M436.2,-5.0 C437.8,2.5 443.8,21.7 446.0,40.0 C448.2,58.3 449.0,94.2 449.6,105.0" fill="none" stroke="#7a5038" stroke-width="1.5" stroke-linecap="round"/>
<path d="M449.0,-5.0 C450.2,2.5 455.9,21.7 456.2,40.0 C456.5,58.3 451.7,94.2 450.8,105.0" fill="none" stroke="#7a5038" stroke-width="2.1" stroke-linecap="round"/>
<path d="M458.7,-5.0 C459.8,2.5 463.4,21.7 465.2,40.0 C466.9,58.3 468.5,94.2 469.2,105.0" fill="none" stroke="#5a3424" stroke-width="1.4" stroke-linecap="round"/>
<path d="M447.7,-5.0 C447.2,2.5 441.4,21.7 444.9,40.0 C448.4,58.3 464.6,94.2 468.5,105.0" fill="none" stroke="#4a2a1c" stroke-width="1.4" stroke-linecap="round"/>
<path d="M66.6,413.4 C76.6,428.4 109.1,471.7 126.6,503.4 C144.1,535.1 159.1,568.4 171.6,603.4 C184.1,638.4 196.6,695.1 201.6,713.4" fill="none" stroke="#4a2a1c" stroke-width="1.0" stroke-linecap="round"/>
<path d="M-13.5,416.0 C-3.5,431.0 29.0,474.4 46.5,506.0 C64.0,537.7 79.0,571.0 91.5,606.0 C104.0,641.0 116.5,697.7 121.5,716.0" fill="none" stroke="#6a4230" stroke-width="1.8" stroke-linecap="round"/>
<path d="M-11.0,443.1 C-1.0,458.1 31.5,501.4 49.0,533.1 C66.5,564.7 81.5,598.1 94.0,633.1 C106.5,668.1 119.0,724.7 124.0,743.1" fill="none" stroke="#6a4230" stroke-width="1.6" stroke-linecap="round"/>
<path d="M15.6,431.9 C25.6,446.9 58.1,490.3 75.6,521.9 C93.1,553.6 108.1,586.9 120.6,621.9 C133.1,656.9 145.6,713.6 150.6,731.9" fill="none" stroke="#4a2a1c" stroke-width="0.8" stroke-linecap="round"/>
<path d="M73.9,439.1 C83.9,454.1 116.4,497.4 133.9,529.1 C151.4,560.7 166.4,594.1 178.9,629.1 C191.4,664.1 203.9,720.7 208.9,739.1" fill="none" stroke="#5a3424" stroke-width="1.4" stroke-linecap="round"/>
<path d="M91.4,427.4 C101.4,442.4 133.9,485.7 151.4,517.4 C168.9,549.0 183.9,582.4 196.4,617.4 C208.9,652.4 221.4,709.0 226.4,727.4" fill="none" stroke="#4a2a1c" stroke-width="1.8" stroke-linecap="round"/>
<path d="M-2.6,420.1 C7.4,435.1 39.9,478.4 57.4,510.1 C74.9,541.7 89.9,575.1 102.4,610.1 C114.9,645.1 127.4,701.7 132.4,720.1" fill="none" stroke="#3a2016" stroke-width="1.4" stroke-linecap="round"/>
<path d="M69.3,423.0 C79.3,438.0 111.8,481.4 129.3,513.0 C146.8,544.7 161.8,578.0 174.3,613.0 C186.8,648.0 199.3,704.7 204.3,723.0" fill="none" stroke="#6a4230" stroke-width="1.8" stroke-linecap="round"/>
<path d="M-22.1,439.6 C-12.1,454.6 20.4,497.9 37.9,529.6 C55.4,561.3 70.4,594.6 82.9,629.6 C95.4,664.6 107.9,721.3 112.9,739.6" fill="none" stroke="#6a4230" stroke-width="1.6" stroke-linecap="round"/>
<path d="M76.0,430.7 C86.0,445.7 118.5,489.0 136.0,520.7 C153.5,552.3 168.5,585.7 181.0,620.7 C193.5,655.7 206.0,712.3 211.0,730.7" fill="none" stroke="#4a2a1c" stroke-width="1.4" stroke-linecap="round"/>
<path d="M38.1,410.7 C48.1,425.7 80.6,469.1 98.1,500.7 C115.6,532.4 130.6,565.7 143.1,600.7 C155.6,635.7 168.1,692.4 173.1,710.7" fill="none" stroke="#6a4230" stroke-width="1.7" stroke-linecap="round"/>
<path d="M49.1,441.0 C59.1,456.0 91.6,499.4 109.1,531.0 C126.6,562.7 141.6,596.0 154.1,631.0 C166.6,666.0 179.1,722.7 184.1,741.0" fill="none" stroke="#4a2a1c" stroke-width="1.0" stroke-linecap="round"/>
<path d="M31.6,439.0 C41.6,454.0 74.1,497.3 91.6,529.0 C109.1,560.7 124.1,594.0 136.6,629.0 C149.1,664.0 161.6,720.7 166.6,739.0" fill="none" stroke="#5a3424" stroke-width="1.2" stroke-linecap="round"/>
<path d="M37.4,432.2 C47.4,447.2 79.9,490.6 97.4,522.2 C114.9,553.9 129.9,587.2 142.4,622.2 C154.9,657.2 167.4,713.9 172.4,732.2" fill="none" stroke="#5a3424" stroke-width="1.9" stroke-linecap="round"/>
<path d="M-22.6,417.7 C-12.6,432.7 19.9,476.0 37.4,507.7 C54.9,539.3 69.9,572.7 82.4,607.7 C94.9,642.7 107.4,699.3 112.4,717.7" fill="none" stroke="#5a3424" stroke-width="1.7" stroke-linecap="round"/>
<path d="M36.0,432.5 C46.0,447.5 78.5,490.8 96.0,522.5 C113.5,554.1 128.5,587.5 141.0,622.5 C153.5,657.5 166.0,714.1 171.0,732.5" fill="none" stroke="#5a3424" stroke-width="1.3" stroke-linecap="round"/>
<path d="M49.6,430.2 C59.6,445.2 92.1,488.6 109.6,520.2 C127.1,551.9 142.1,585.2 154.6,620.2 C167.1,655.2 179.6,711.9 184.6,730.2" fill="none" stroke="#4a2a1c" stroke-width="1.6" stroke-linecap="round"/>
<path d="M28.8,431.3 C38.8,446.3 71.3,489.7 88.8,521.3 C106.3,553.0 121.3,586.3 133.8,621.3 C146.3,656.3 158.8,713.0 163.8,731.3" fill="none" stroke="#6a4230" stroke-width="1.4" stroke-linecap="round"/>
<path d="M2.2,430.9 C12.2,445.9 44.7,489.3 62.2,520.9 C79.7,552.6 94.7,585.9 107.2,620.9 C119.7,655.9 132.2,712.6 137.2,730.9" fill="none" stroke="#3a2016" stroke-width="1.9" stroke-linecap="round"/>
<path d="M86.1,418.1 C96.1,433.1 128.6,476.4 146.1,508.1 C163.6,539.8 178.6,573.1 191.1,608.1 C203.6,643.1 216.1,699.8 221.1,718.1" fill="none" stroke="#6a4230" stroke-width="1.0" stroke-linecap="round"/>
<path d="M399.7,232.7 C398.3,245.6 394.2,275.4 391.3,310.0 C388.5,344.6 384.1,418.3 382.7,440.0" fill="none" stroke="#4a2a1c" stroke-width="1.1" stroke-linecap="round"/>
<path d="M414.2,219.9 C415.4,234.9 420.3,273.3 421.3,310.0 C422.3,346.7 420.4,418.3 420.2,440.0" fill="none" stroke="#5a3424" stroke-width="1.6" stroke-linecap="round"/>
<path d="M401.4,250.3 C403.3,260.3 415.7,278.4 412.7,310.0 C409.8,341.6 388.5,418.3 383.7,440.0" fill="none" stroke="#4a2a1c" stroke-width="1.3" stroke-linecap="round"/>
<path d="M429.0,254.6 C430.4,263.8 440.6,279.1 437.3,310.0 C434.0,340.9 414.0,418.3 409.3,440.0" fill="none" stroke="#3a2016" stroke-width="2.0" stroke-linecap="round"/>
<path d="M422.3,231.9 C421.9,244.9 423.8,275.3 420.2,310.0 C416.5,344.7 403.6,418.3 400.3,440.0" fill="none" stroke="#3a2016" stroke-width="0.8" stroke-linecap="round"/>
<path d="M434.3,232.6 C432.7,245.5 427.1,275.4 424.7,310.0 C422.4,344.6 421.0,418.3 420.3,440.0" fill="none" stroke="#5a3424" stroke-width="1.2" stroke-linecap="round"/>
<path d="M466.9,219.5 C468.6,234.6 480.0,273.3 477.1,310.0 C474.2,346.7 454.0,418.3 449.4,440.0" fill="none" stroke="#4a2a1c" stroke-width="0.9" stroke-linecap="round"/>
<path d="M411.8,251.2 C410.8,261.0 405.8,278.5 405.7,310.0 C405.7,341.5 410.7,418.3 411.7,440.0" fill="none" stroke="#3a2016" stroke-width="1.8" stroke-linecap="round"/>
<path d="M444.1,252.8 C443.9,262.4 444.2,278.8 443.0,310.0 C441.8,341.2 437.8,418.3 436.8,440.0" fill="none" stroke="#5a3424" stroke-width="1.5" stroke-linecap="round"/>
<path d="M446.0,218.6 C444.6,233.8 437.7,273.1 437.3,310.0 C436.9,346.9 442.7,418.3 443.7,440.0" fill="none" stroke="#3a2016" stroke-width="1.9" stroke-linecap="round"/>
<path d="M411.5,215.7 C410.2,231.4 406.2,272.6 403.5,310.0 C400.7,347.4 396.5,418.3 395.1,440.0" fill="none" stroke="#5a3424" stroke-width="1.8" stroke-linecap="round"/>
<path d="M395.3,249.5 C395.3,259.6 397.6,278.3 395.3,310.0 C393.0,341.7 383.8,418.3 381.5,440.0" fill="none" stroke="#5a3424" stroke-width="1.3" stroke-linecap="round"/>
<path d="M463.2,239.9 C461.7,251.6 454.4,276.6 454.2,310.0 C453.9,343.4 460.4,418.3 461.6,440.0" fill="none" stroke="#4a2a1c" stroke-width="2.0" stroke-linecap="round"/>
<path d="M411.0,222.2 C412.7,236.9 422.2,273.7 421.5,310.0 C420.8,346.3 409.2,418.3 406.7,440.0" fill="none" stroke="#5a3424" stroke-width="1.7" stroke-linecap="round"/>
</g>
</g>
<rect x="0.5" y="0.5" width="469" height="703" fill="none" stroke="#000"/></svg>
</body>
</html>
